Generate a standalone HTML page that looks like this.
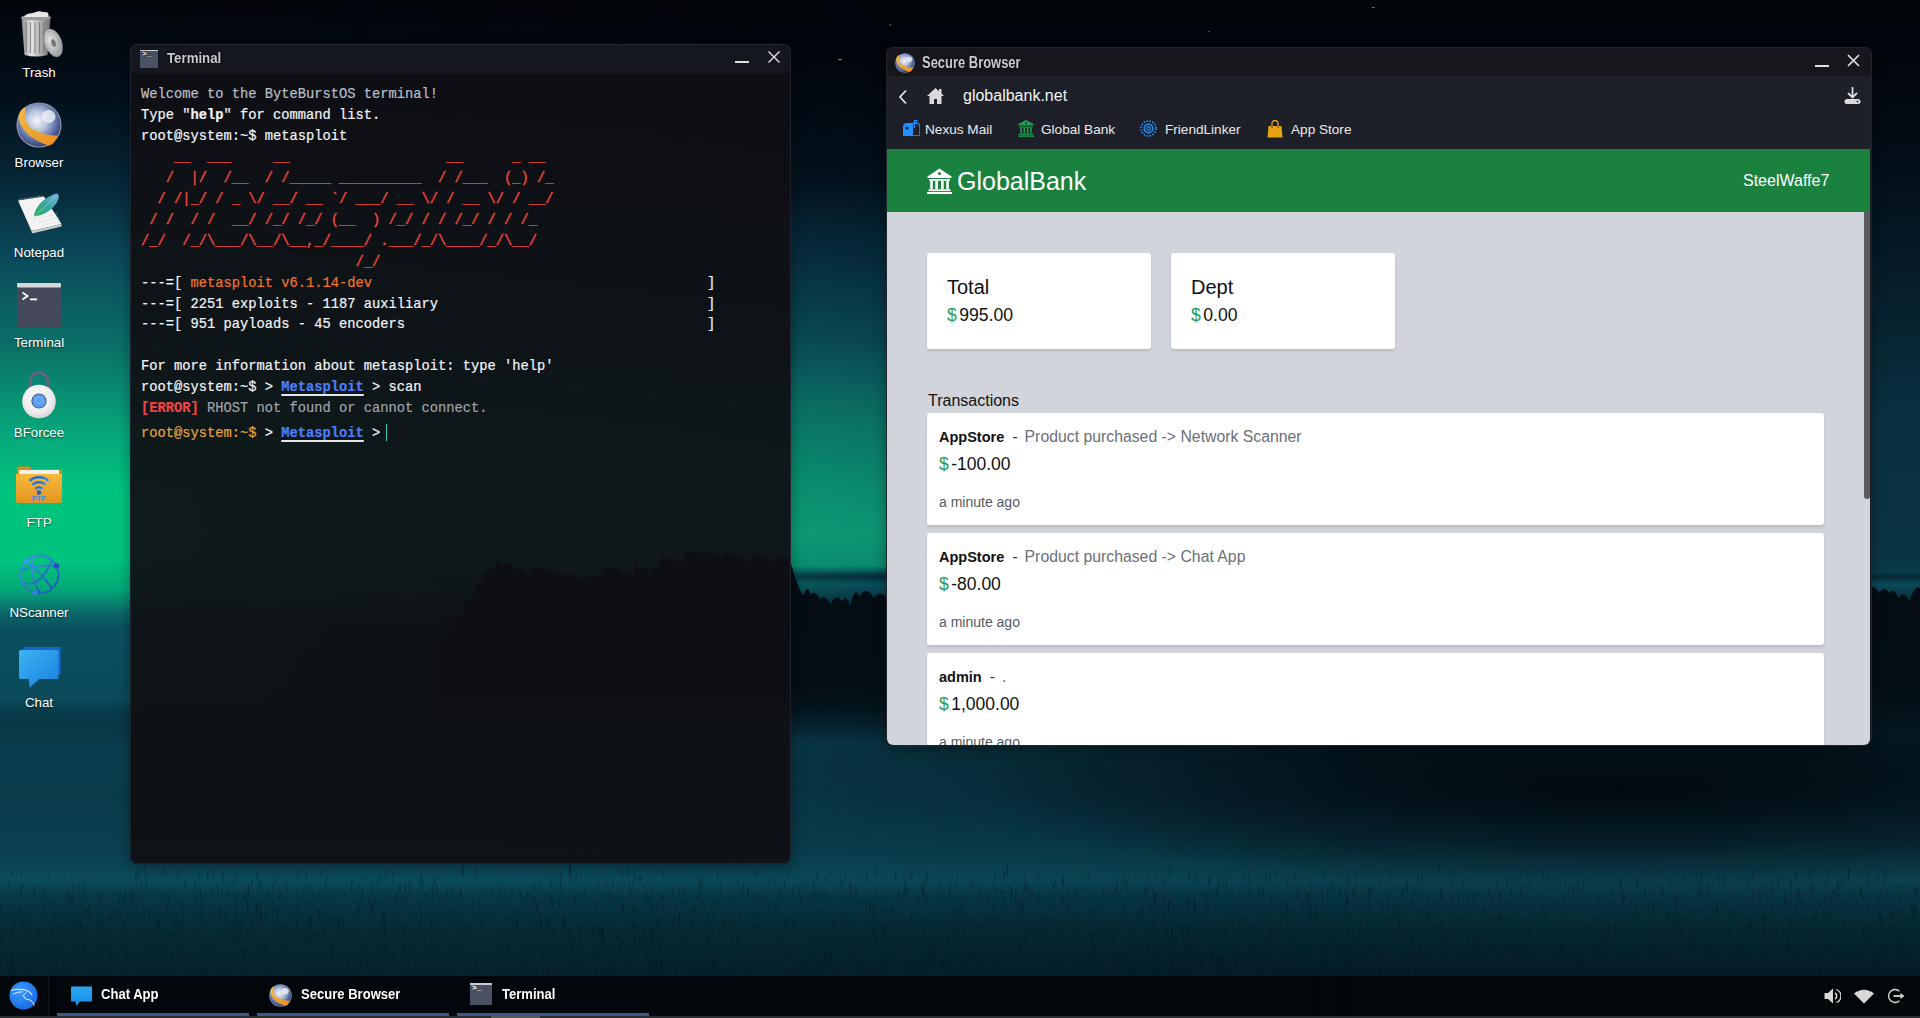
<!DOCTYPE html>
<html><head><meta charset="utf-8">
<style>
*{box-sizing:border-box;margin:0;padding:0}
html,body{width:1920px;height:1018px;overflow:hidden;background:#03060c;font-family:"Liberation Sans",sans-serif}
#bg{position:absolute;left:0;top:0;width:1920px;height:1018px;overflow:hidden}
.layer{position:absolute;left:0;top:0;width:100%;height:100%}
/* desktop icons */
.dicon{position:absolute;left:0;width:78px;height:90px;text-align:center}
.dicon .ic{position:absolute;left:15px;top:8px;width:48px;height:48px}
.dicon .lb{position:absolute;left:-10px;width:98px;top:65px;color:#fff;font-size:13.3px;line-height:16px;text-shadow:0 1px 2px rgba(0,0,0,.6)}
/* windows */
.win{position:absolute;border-radius:7px;overflow:hidden;box-shadow:0 4px 14px rgba(0,0,0,.35)}
.win:after{content:"";position:absolute;left:0;top:0;right:0;bottom:0;border:1px solid rgba(40,44,54,.7);border-radius:7px;pointer-events:none}
.tbar{position:absolute;left:0;top:0;right:0;color:#cfd0d4;font-weight:bold;font-size:14.5px;text-shadow:0 0 2px #000,0 0 1px #000}
.term{left:130px;top:44px;width:661px;height:820px;background:rgba(15,16,20,0.94)}
.term .tbar{height:29px;background:rgba(20,23,31,0.98)}
.mono{position:absolute;left:141px;font-family:"Liberation Mono",monospace;font-size:13.75px;white-space:pre;color:#f2f4f7;-webkit-text-stroke:0.2px currentColor}
.ms{color:#4d7ef7;font-weight:bold;text-decoration:underline;text-decoration-color:#e6e6e6;text-underline-offset:3px;text-decoration-thickness:2px}
.cur{display:inline-block;width:1.6px;height:17px;background:#2ec4b6;vertical-align:-4px;margin-left:-3px}
.card{position:absolute;background:#fff;border-radius:3px;box-shadow:0 2px 3px rgba(0,0,0,.12)}
.ct{position:absolute;left:20px;top:22px;font-size:20px;line-height:24px;color:#111}
.cv{position:absolute;left:20px;top:51px;font-size:17.6px;line-height:22px;color:#111}
.dl{color:#1f9d55;margin-right:2.5px}
.tx{position:absolute;left:40px;width:897px;height:112px;background:#fff;border-radius:3px;box-shadow:0 2px 3px rgba(0,0,0,.12)}
.tn{position:absolute;left:12px;top:14px;font-size:16px;line-height:20px;color:#111;white-space:pre}
.tn b{font-size:14.5px;font-weight:bold}
.dash{margin:0 7px 0 8px;color:#333}
.desc{color:#6b6f78;font-size:15.8px}
.tv{position:absolute;left:12px;top:39.5px;font-size:17.5px;line-height:22px;color:#111}
.tm{position:absolute;left:12px;top:80px;font-size:14px;line-height:18px;color:#555a63}
.tbi{position:absolute;top:0;width:192px;height:42px}
.tbi:after{content:"";position:absolute;left:0;top:37px;width:192px;height:3px;background:#3a5a8a}
.tic{position:absolute}
.tbt{position:absolute;top:10px;color:#fff;font-weight:bold;font-size:14.5px;line-height:17px;text-shadow:0 0 2px #000;transform:scaleX(.9);transform-origin:0 0;white-space:nowrap}
.globe{border-radius:50%;background:radial-gradient(circle at 62% 35%,#ffffff 0,#dfe6f2 18%,#8aa0c8 45%,#3b4f86 70%,#1d2450 100%);box-shadow:inset 0 0 0 1px rgba(255,255,255,0.25)}
.globe:before{content:"";position:absolute;left:6%;top:6%;width:88%;height:88%;border-radius:50%;border:0 solid transparent;border-left:3px solid #f0a030;border-bottom:3px solid #f0a030;transform:rotate(20deg);opacity:.95}
.termic{background:#4a5162;border-top:2px solid #c9ccd3}
.termic:before{content:">_";position:absolute;left:2px;top:-2px;color:#fff;font-family:"Liberation Mono",monospace;font-size:8px;font-weight:bold}
.browser{left:886px;top:47px;width:986px;height:699px;background:#15171c}
</style></head>
<body>
<div id="bg">
  <div class="layer" style="background:linear-gradient(180deg,#02050a 0px,#02060c 60px,#030e18 160px,#06202c 300px,#0a3040 420px,#0a3444 560px,#0a3a48 572px,#062a36 577px,#0a4a58 584px,#0a3a48 594px,#05141c 625px,#05141c 700px,#071c26 730px,#061e28 770px,#062230 800px,#082e3c 840px,#0a3a48 866px,#0b404e 882px,#083442 895px,#052630 930px,#041c24 976px)"></div>
  <div class="layer" style="background:linear-gradient(180deg,rgba(10,50,70,0) 180px,rgba(10,56,76,.5) 260px,rgba(10,80,90,.75) 340px,rgba(12,115,102,.88) 410px,rgba(12,138,110,.95) 480px,rgba(14,148,116,1) 535px,rgba(12,140,112,.95) 566px,rgba(10,60,80,.3) 574px,rgba(10,60,80,0) 580px);-webkit-mask-image:linear-gradient(90deg,#000 0,#000 900px,rgba(0,0,0,.25) 1350px,rgba(0,0,0,0) 1750px);mask-image:linear-gradient(90deg,#000 0,#000 900px,rgba(0,0,0,.25) 1350px,rgba(0,0,0,0) 1750px)"></div>
  <div class="layer" style="background:linear-gradient(180deg,#02050a 0px,#03101c 100px,#062636 180px,#0a4658 250px,#0a7268 350px,#07a57a 430px,#00c47e 490px,#00c47e 560px,#05a878 590px,#0a6a68 612px,#0b5060 628px,#0b4a5a 700px,rgba(10,62,78,0) 745px);-webkit-mask-image:linear-gradient(90deg,#000 0,#000 140px,rgba(0,0,0,.55) 450px,rgba(0,0,0,0) 900px);mask-image:linear-gradient(90deg,#000 0,#000 140px,rgba(0,0,0,.55) 450px,rgba(0,0,0,0) 900px)"></div>
  <div class="layer" style="background:linear-gradient(180deg,rgba(10,62,78,0) 700px,#0a3e4e 745px,#0a3c4c 800px,#0a4050 850px,#0b4c5c 880px,#083644 897px,#062a36 930px,#05222c 976px);-webkit-mask-image:linear-gradient(90deg,#000 0,#000 500px,rgba(0,0,0,.6) 900px,rgba(0,0,0,0) 1350px);mask-image:linear-gradient(90deg,#000 0,#000 500px,rgba(0,0,0,.6) 900px,rgba(0,0,0,0) 1350px)"></div>
  <div class="layer" style="background:radial-gradient(ellipse 650px 100px at 1620px 790px,rgba(1,6,10,.85) 0%,rgba(1,6,10,0) 100%)"></div>
  <svg class="layer" width="1920" height="1018" viewBox="0 0 1920 1018"><defs><linearGradient id="treeg" x1="0" y1="540" x2="0" y2="740" gradientUnits="userSpaceOnUse"><stop offset="0" stop-color="#030c12"/><stop offset="0.75" stop-color="#040e15"/><stop offset="1" stop-color="#05141c" stop-opacity="0"/></linearGradient></defs>
    <path d="M436 740 L436 640 Q441.3 627.9 446.6 639.2 Q453.8 608.7 461.0 619.5 Q466.5 589.2 472.1 600.8 Q476.3 574.3 480.6 585.4 Q486.6 562.4 492.6 570.9 Q497.3 554.5 502.0 567.3 Q508.3 555.6 514.6 569.5 Q521.9 566.2 529.3 577.9 Q533.4 558.6 537.5 569.8 Q541.3 561.8 545.0 571.2 Q548.6 566.1 552.3 576.7 Q559.1 567.2 566.0 579.1 Q571.5 569.2 577.0 579.9 Q581.6 573.4 586.2 587.4 Q593.1 568.4 599.9 578.3 Q604.4 561.2 608.8 569.6 Q615.3 561.2 621.9 574.3 Q627.0 567.1 632.0 580.2 Q635.5 555.1 639.0 568.6 Q644.4 564.3 649.8 574.7 Q653.6 557.8 657.4 570.4 Q661.9 548.7 666.5 558.7 Q673.9 556.3 681.2 565.0 Q685.7 545.5 690.2 553.9 Q696.9 545.5 703.6 556.8 Q708.9 544.9 714.2 557.3 Q718.2 551.0 722.2 559.7 Q727.4 545.1 732.6 554.7 Q739.9 553.9 747.3 563.7 Q754.4 546.9 761.4 557.3 Q768.3 554.8 775.2 563.4 Q782.7 551.1 790.2 560.6 Q796.8 585.9 803.3 595.7 Q807.1 583.1 810.9 594.6 Q815.4 589.2 819.9 599.4 Q825.2 593.5 830.5 604.4 Q836.3 592.4 842.1 601.5 Q846.2 592.9 850.3 605.8 Q854.8 584.3 859.3 596.7 Q866.6 584.4 873.8 598.1 Q880.9 589.2 887.9 599.8 Q891.8 576.6 895.7 590.4 Q900.2 587.3 904.6 596.8 Q911.4 585.5 918.2 595.3 Q922.4 587.5 926.6 595.9 Q931.1 584.9 935.5 598.1 Q941.4 580.5 947.4 594.0 Q951.7 576.3 956.0 585.9 Q961.3 577.0 966.6 586.0 Q971.6 585.2 976.5 593.9 Q981.5 590.3 986.4 604.1 Q992.6 587.1 998.7 598.6 Q1002.7 576.6 1006.8 584.7 Q1013.9 587.2 1021.1 601.0 Q1024.7 586.2 1028.3 597.1 Q1034.7 581.1 1041.1 595.1 Q1044.9 584.7 1048.7 597.2 Q1055.8 587.8 1062.9 600.0 Q1069.6 590.6 1076.2 600.8 Q1082.5 590.4 1088.7 603.6 Q1093.9 588.6 1099.1 601.8 Q1104.9 586.0 1110.6 596.3 Q1116.5 585.7 1122.3 594.2 Q1128.4 591.9 1134.4 605.2 Q1140.8 582.2 1147.3 594.6 Q1153.1 583.0 1158.9 596.1 Q1162.7 588.0 1166.6 596.2 Q1172.5 583.7 1178.4 593.1 Q1184.7 584.0 1191.0 595.6 Q1198.1 580.1 1205.3 588.2 Q1210.0 586.9 1214.7 596.1 Q1218.9 590.5 1223.1 602.5 Q1228.4 590.3 1233.6 600.2 Q1239.8 579.2 1246.0 589.8 Q1252.7 590.6 1259.4 603.9 Q1264.4 585.3 1269.5 595.2 Q1273.5 583.9 1277.6 597.0 Q1284.5 587.4 1291.4 601.1 Q1296.0 578.7 1300.6 589.4 Q1305.2 579.4 1309.8 589.9 Q1315.8 583.9 1321.8 593.8 Q1328.6 591.7 1335.5 602.4 Q1339.3 576.5 1343.1 589.7 Q1346.8 587.3 1350.4 598.8 Q1355.2 588.7 1359.9 596.8 Q1363.9 583.3 1368.0 591.4 Q1374.8 579.8 1381.6 588.6 Q1385.3 586.1 1389.0 596.7 Q1395.0 586.5 1401.0 599.3 Q1408.4 587.0 1415.7 596.1 Q1421.1 578.9 1426.5 586.9 Q1431.9 587.4 1437.3 596.5 Q1441.9 581.5 1446.5 593.7 Q1452.0 585.8 1457.6 598.4 Q1462.7 588.7 1467.8 602.1 Q1471.6 590.9 1475.5 603.3 Q1479.5 583.3 1483.5 595.0 Q1490.6 582.0 1497.8 593.4 Q1504.8 588.7 1511.8 602.4 Q1517.2 586.4 1522.5 595.7 Q1528.9 589.1 1535.3 600.9 Q1541.7 579.4 1548.1 592.8 Q1555.5 591.6 1562.9 602.9 Q1569.6 581.1 1576.2 594.6 Q1583.1 581.6 1590.1 590.1 Q1595.3 584.8 1600.6 597.4 Q1606.0 576.5 1611.5 589.3 Q1615.2 588.8 1619.0 597.8 Q1623.8 588.6 1628.7 597.4 Q1632.8 584.3 1636.9 596.6 Q1643.7 587.0 1650.6 600.7 Q1656.1 591.2 1661.5 599.7 Q1665.9 584.4 1670.3 594.2 Q1676.7 586.2 1683.1 597.4 Q1690.0 585.0 1696.9 594.8 Q1701.9 589.5 1706.9 602.9 Q1711.3 589.6 1715.6 603.4 Q1721.2 585.2 1726.8 594.4 Q1732.4 584.1 1738.1 595.7 Q1741.7 591.5 1745.3 602.6 Q1750.4 588.8 1755.5 600.2 Q1761.0 587.1 1766.4 595.5 Q1772.1 582.6 1777.7 596.4 Q1784.9 580.3 1792.1 591.1 Q1796.1 582.9 1800.2 595.8 Q1807.3 583.6 1814.4 593.5 Q1818.6 585.9 1822.9 599.4 Q1826.9 588.5 1830.9 596.6 Q1835.2 579.6 1839.5 591.8 Q1844.3 581.7 1849.1 593.4 Q1853.0 587.7 1856.9 596.4 Q1862.4 580.0 1868.0 589.2 Q1873.6 583.0 1879.2 593.2 Q1884.4 584.5 1889.5 593.4 Q1893.8 586.1 1898.2 597.9 Q1903.8 589.6 1909.4 601.3 Q1916.3 579.7 1923.3 592.2 L1920 740 Z" fill="url(#treeg)"/><g fill="#5fd6c8"><rect x="838.5" y="59" width="3" height="1.2" opacity=".8"/><rect x="889" y="24.5" width="2.5" height="1" opacity=".6"/><rect x="1372" y="7" width="2.5" height="1" opacity=".7"/><rect x="1208" y="31" width="2" height="1" opacity=".4"/></g><path d="M1196 963l0.7 -11M1771 935l0.4 -11M1730 935l0.1 -5M1102 913l1.2 -6M1470 963l0.4 -4M243 969l-0.9 -5M1886 882l0.1 -12M1301 975l1.4 -9M1716 926l-1.1 -4M125 946l0.5 -3M649 965l-0.6 -7M924 900l-1.4 -12M1440 875l-0.4 -10M1111 899l1.4 -5M377 974l-0.5 -11M681 961l0.7 -4M1531 876l-1.2 -12M654 973l1.3 -6M1047 922l-1.3 -5M286 980l-1.4 -4M1894 930l0.3 -5M1586 931l1.2 -4M63 966l0.7 -4M1824 962l-0.2 -4M287 882l1.5 -7M1636 886l0.7 -7M920 929l-0.4 -4M1898 891l-0.5 -7M171 961l-0.4 -11M1509 954l0.8 -9M698 919l0.8 -7M1326 975l0.2 -9M22 916l-0.1 -9M1568 963l0.4 -6M1417 884l1.1 -11M1322 899l0.1 -8M319 898l0.6 -7M1382 910l0.2 -10M1278 948l0.4 -10M1383 909l0.5 -7M421 949l-0.1 -3M434 906l-1.0 -6M371 935l0.3 -6M1133 972l-0.3 -3M535 905l-0.4 -10M69 903l-0.5 -8M1115 895l0.9 -7M1233 907l0.2 -8M1838 890l1.2 -6M2 943l-1.1 -9M1209 884l-0.8 -7M560 884l1.2 -12M1144 978l-0.3 -7M613 887l-0.1 -6M234 933l0.8 -6M1587 940l1.3 -5M1501 918l1.5 -4M563 935l0.3 -9M1427 960l0.1 -6M645 940l-0.4 -7M1430 898l-0.1 -5M1760 889l0.8 -3M821 955l-0.1 -9M1750 928l-0.9 -11M569 877l0.6 -11M831 961l-1.1 -11M919 937l-1.0 -6M1125 877l1.0 -5M1520 897l1.4 -10M1917 899l-0.8 -11M1240 893l-0.6 -4M1763 947l-1.0 -7M1195 904l-1.3 -6M111 958l-1.1 -11M829 946l1.3 -7M718 954l0.4 -4M971 889l-0.7 -9M1059 959l-1.1 -8M450 958l0.6 -5M1258 952l-1.1 -4M1140 970l-0.5 -7M1529 957l-1.0 -3M1828 914l1.4 -4M1277 878l-0.4 -9M451 947l-0.3 -6M262 891l-0.2 -10M1635 945l0.7 -8M759 898l-1.4 -5M1707 960l-0.1 -3M1708 931l-1.2 -7M297 927l1.1 -6M292 919l-0.6 -4M452 898l-0.4 -11M1801 952l1.3 -7M226 920l0.7 -9M313 897l-1.3 -5M770 884l-0.1 -6M544 956l-0.8 -4M1291 891l1.4 -7M12 961l-1.4 -7M1053 888l-1.2 -6M137 887l-1.3 -11M467 929l-0.7 -4M782 899l1.4 -3M344 929l-1.2 -8M603 941l0.3 -11M1645 896l-0.0 -8M1097 948l1.2 -10M591 965l-1.2 -5M598 961l-0.6 -10M249 916l-0.2 -4M1108 900l-1.4 -9M384 927l-0.2 -4M603 942l0.5 -11M1459 933l0.5 -10M1833 955l0.9 -5M734 901l-0.7 -5M1298 900l0.2 -10M53 906l1.1 -6M1823 915l-0.4 -7M634 945l0.7 -10M183 910l-0.2 -9M1802 905l1.2 -6M885 933l1.3 -10M1023 890l0.9 -4M805 978l0.2 -3M925 885l-0.7 -5M386 925l-0.8 -10M675 979l1.0 -11M1187 907l-0.0 -10M72 903l1.2 -9M383 923l1.1 -9M1196 884l0.0 -3M1126 928l-1.4 -6M599 935l-0.3 -9M1886 898l0.5 -9M1030 926l0.5 -8M1003 902l-0.4 -4M1114 956l1.3 -6M527 901l0.5 -10M1837 892l0.7 -11M1173 939l-0.8 -11M1871 928l-0.3 -3M342 971l0.3 -11M742 954l0.6 -8M718 880l-0.7 -6M1195 879l0.8 -9M431 943l1.1 -10M1398 931l1.2 -8M580 946l-0.9 -12M59 943l-0.9 -8M365 950l0.7 -9M118 966l-0.5 -12M1633 974l0.6 -5M1614 904l-1.0 -5M178 947l0.8 -4M1414 895l1.3 -9M1837 977l-1.2 -4M124 927l0.5 -7M1426 929l-0.4 -8M226 927l-0.0 -9M1848 877l0.7 -10M568 936l0.7 -6M1763 920l0.6 -7M1515 920l1.0 -6M997 931l0.5 -5M141 903l1.5 -7M1039 974l-0.4 -4M1557 960l-1.5 -6M482 928l-1.3 -8M420 886l-1.2 -7M536 892l-1.3 -8M754 932l1.2 -8M1239 898l0.8 -3M793 896l-0.4 -11M1918 971l0.8 -4M810 900l-0.2 -5M520 919l-1.1 -9M325 901l1.2 -6M1700 897l1.4 -10M1150 915l1.3 -11M60 931l0.8 -5M716 908l1.4 -8M1348 904l-0.4 -9M708 944l-0.8 -12M1092 941l-1.1 -10M924 896l-0.2 -10M968 962l0.0 -4M74 924l-0.6 -3M864 974l0.1 -6M1369 899l-0.6 -12M320 877l0.7 -7M1015 974l0.2 -6M1593 925l0.2 -7M398 900l-0.5 -4M276 882l0.9 -5M1423 965l-0.3 -9M1207 917l-0.2 -11M1723 907l0.7 -3M1078 899l-0.0 -10M1673 945l0.7 -4M1174 914l-1.2 -12M123 903l-0.1 -4M1246 893l0.4 -4M1620 959l-0.6 -5M3 939l-0.1 -11M298 917l-0.9 -12M169 902l0.4 -7M1249 907l0.6 -7M859 973l-0.7 -4M948 972l0.5 -8M806 966l-1.2 -6M498 971l0.4 -5M1230 878l-0.5 -10M198 967l-1.4 -8M1866 949l-0.7 -10M784 903l0.7 -4M788 877l-1.0 -6M1811 971l-1.2 -8M799 897l-0.6 -8M207 974l-0.1 -12M197 905l-1.2 -8M1895 932l0.2 -5M1868 913l1.3 -8M733 973l0.9 -6M1016 900l-0.1 -11M851 889l-0.6 -8M1429 935l0.3 -10M258 954l-1.2 -10M1915 909l-0.2 -4M1190 879l-1.2 -9M1114 925l0.7 -3M235 924l0.4 -8M938 898l-0.5 -6M1684 931l1.4 -7M246 959l-1.5 -10M1812 968l-0.2 -9M1608 924l0.0 -10M1366 963l-0.0 -4M2 961l-1.4 -11M1028 905l1.4 -5M1637 965l-0.3 -9M1238 918l0.5 -3M1116 938l-0.6 -7M1412 946l-0.2 -10M1317 917l-1.1 -11M109 960l-0.1 -4M842 887l-1.4 -8M1527 948l0.3 -11M1375 890l1.2 -3M1900 901l-1.2 -6M709 914l-0.2 -3M576 928l1.4 -4M1717 913l-0.1 -7M785 934l0.6 -10M1652 960l1.3 -11M1523 951l1.1 -9M1370 911l-0.7 -6M1309 911l1.0 -8M702 946l-1.1 -6M553 908l-1.2 -7M12 976l-0.5 -11M1775 908l-1.3 -3M1155 936l-0.1 -10M1764 941l-0.2 -5M845 881l0.9 -6M136 914l0.3 -9M181 930l1.1 -6M1495 953l0.1 -4M158 973l-1.4 -9M985 933l-0.7 -4M863 952l-0.6 -5M174 974l-1.2 -6M664 877l-0.9 -6M1309 903l-0.5 -11M1317 969l-0.8 -4M548 965l-0.5 -8M973 889l0.5 -7M1181 931l-0.2 -4M1688 926l0.3 -8M337 957l-1.2 -3M1450 877l0.4 -4M546 898l-1.0 -7M638 938l1.0 -11M1189 879l-0.5 -7M1200 970l0.9 -6M1810 885l1.5 -11M250 957l-0.7 -7M333 974l-0.7 -7M1189 947l-0.6 -7M68 891l-0.0 -5M1115 972l-0.6 -10M650 909l-1.4 -11M959 940l-0.8 -3M1899 914l-1.4 -7M234 979l-0.8 -6M125 980l1.3 -10M1605 917l-0.7 -5M126 956l-1.5 -7M585 896l0.7 -10M1751 928l-0.7 -8M70 934l-1.3 -4M475 976l1.0 -7M1429 922l-0.5 -7M1218 895l-1.1 -6M17 914l-0.6 -3M439 951l-0.7 -8M1403 973l0.3 -4M1353 936l0.4 -11M1326 911l0.1 -7M183 924l0.1 -7M1610 943l0.5 -8M599 935l0.4 -8M257 943l-1.2 -5M1784 937l-1.4 -6M518 929l-1.3 -11M675 948l-0.8 -3M540 886l-0.1 -5M931 952l-0.1 -9M1032 976l-1.4 -9M970 923l-0.4 -9M1184 952l0.6 -11M1362 915l0.4 -9M117 914l0.1 -7M1387 935l-0.2 -11M1088 883l1.4 -9M162 950l0.9 -8M1651 936l0.6 -9M1840 896l-0.2 -4M1754 894l0.8 -6M1021 949l0.6 -11M1863 937l0.2 -9M94 883l-1.4 -7M365 882l0.9 -6M463 943l-0.1 -11M631 926l-1.1 -3M286 960l-0.4 -11M480 948l-1.1 -7M1006 907l-1.2 -10M843 941l-0.5 -11M1817 971l-1.5 -7M498 893l0.9 -10M12 935l1.2 -11M287 889l-1.3 -6M819 934l1.3 -6M913 961l-0.2 -5M200 980l0.1 -9M1293 939l-1.1 -6M57 929l0.5 -3M648 922l-0.9 -7M1637 901l1.2 -4M1110 956l1.2 -3M1798 899l1.0 -7M1139 915l0.1 -4M348 971l-0.0 -11M1505 976l-0.1 -11M1701 978l1.3 -6M1607 893l-0.7 -4M1259 892l-0.5 -3M663 914l-0.4 -8M513 976l0.8 -8M1791 970l-0.9 -4M1420 947l0.7 -7M822 914l-1.4 -4M1828 884l-0.7 -7M1500 909l1.3 -11M89 914l-0.4 -9M572 947l-0.0 -8M1307 975l0.9 -7M1787 945l0.6 -10M371 908l0.6 -3M631 897l0.5 -3M687 952l0.6 -11M421 880l0.4 -8M552 890l-1.1 -9M1598 948l-0.5 -10M509 978l-0.1 -9M1079 917l-1.2 -4M1118 978l1.1 -9M1895 931l-0.4 -7M1459 905l0.1 -12M1438 945l-1.2 -8M251 925l0.9 -4M1436 928l0.8 -4M414 954l-1.5 -5M1133 945l-0.8 -12M1404 944l-0.8 -6M1053 972l-0.0 -8M1250 930l0.5 -5M743 909l0.6 -6M1260 964l-0.4 -6M1442 931l-1.4 -11M1030 897l0.9 -5M1024 883l0.4 -9M1902 928l0.6 -4M135 879l1.3 -5M957 924l-0.4 -5M1887 972l0.5 -11M510 972l-0.8 -8M1171 890l-0.9 -4M1210 895l-0.7 -6M948 943l-0.5 -9M1117 962l0.4 -8M1082 877l1.1 -4M1602 971l1.1 -8M1346 905l0.6 -10M903 926l-0.1 -11M403 899l-0.9 -5M1401 935l-0.7 -9M1141 914l-0.2 -8M1717 973l-0.5 -5M204 978l1.0 -6M1875 911l-1.0 -7M479 909l0.1 -9M559 907l-0.2 -4M144 917l-0.7 -10M1644 898l1.3 -5M906 887l-0.7 -8M1454 970l-0.2 -9M60 930l0.2 -6M10 971l0.6 -12M1318 980l-0.1 -10M951 889l-0.6 -8M1275 975l1.5 -12M1825 901l1.0 -6M1072 904l-1.1 -5M276 911l0.4 -5M251 891l0.7 -11M1403 931l-0.3 -6M1752 963l-1.3 -9M404 962l-0.8 -5M724 931l0.3 -11M534 938l-0.3 -4M125 969l0.3 -11M739 942l0.1 -5M955 933l0.4 -11M632 949l-0.6 -8M905 948l-0.4 -11M1033 952l-0.8 -5M1771 953l-0.0 -5M867 910l-1.4 -12M274 927l0.8 -5M1885 955l1.5 -7M1146 892l-0.2 -4M1354 902l1.3 -12M1250 955l0.8 -12M1373 949l-0.0 -11M143 976l1.3 -9M284 953l-0.1 -7M447 961l-0.2 -10M942 935l-0.1 -6M1848 878l1.0 -9M662 899l0.4 -4M731 942l0.4 -11M1706 963l-1.0 -7M1542 914l-0.0 -11M1294 883l0.1 -8M548 977l-0.7 -9M1312 926l-0.4 -9M1500 965l-1.0 -6M632 969l-0.3 -12M461 896l-0.6 -5M955 913l-1.1 -7M277 921l1.4 -11M1287 960l1.1 -6M814 959l0.8 -9M657 926l-1.4 -12M542 932l-1.0 -11M200 924l-0.1 -10M1240 926l-1.4 -7M1828 903l0.8 -5M975 959l1.0 -4M386 959l-0.6 -10M740 920l1.5 -7M249 897l-0.8 -12M381 910l0.2 -11M1616 937l-1.1 -12M433 890l1.5 -10M1482 959l-0.8 -8M624 888l0.4 -3M1908 937l0.4 -7M1181 972l0.8 -11M1393 912l-0.7 -7M393 881l1.0 -10M777 910l0.6 -9M681 909l0.8 -9M1503 944l-0.7 -3M780 901l0.6 -12M1080 969l-0.2 -9M753 899l1.0 -4M1234 954l0.7 -5M1073 900l1.4 -11M1461 956l0.1 -4M663 920l-0.2 -4M456 923l-1.4 -4M1870 971l-1.1 -7M824 900l-1.5 -8M573 967l-0.3 -5M1819 905l1.1 -5M662 975l-0.9 -9M923 936l1.4 -9M1322 964l-0.9 -8M1287 913l-0.0 -6M62 977l-0.4 -8M877 938l0.2 -7M529 931l-0.5 -9M1226 936l-1.5 -7M243 960l1.0 -10M1548 880l-1.1 -4M1522 922l1.2 -4M402 946l-1.4 -9M1113 942l0.9 -8M1579 883l-0.1 -3M51 936l1.0 -10M1406 923l0.4 -10M421 887l-0.9 -8M1596 958l0.1 -11M1124 915l1.3 -10M67 935l-0.2 -4M656 961l1.3 -8M373 947l-0.2 -10M357 943l0.5 -12M1621 886l1.0 -8M1389 911l-0.6 -10M508 953l1.3 -9M1132 970l0.3 -4M1896 908l-1.4 -4M1406 965l-1.4 -11M589 917l-0.7 -3M652 940l-1.2 -12M258 882l-0.6 -8M1719 889l-0.4 -4M1352 919l-1.3 -7M775 885l-1.0 -7M1368 928l-0.6 -10M149 958l-0.5 -3M1701 930l-0.6 -4M1127 892l-0.3 -12M132 926l-1.3 -4M1749 878l1.4 -4M320 914l-1.4 -5M887 901l-1.1 -7M1512 897l-1.1 -8M1377 961l1.2 -6M547 937l-0.0 -5M827 941l0.6 -8M652 912l-0.8 -8M1509 920l-0.6 -4M1039 905l-0.6 -11M415 967l1.2 -10M1048 938l0.5 -4M1611 896l0.9 -9M560 909l0.0 -11M339 891l1.0 -5M1202 970l-0.7 -6M1095 954l-0.9 -7M239 944l0.9 -11M1629 963l-0.4 -6M1735 948l-1.3 -8M1087 971l1.2 -7M73 892l-0.2 -10M1128 881l0.8 -5M1682 941l-0.6 -8M1619 961l-1.1 -7M1847 904l-0.4 -3M51 975l0.6 -5M410 896l1.4 -4M877 899l-0.6 -9M346 955l0.2 -6M362 899l1.3 -11M1106 929l0.2 -10M1362 929l-1.0 -10M657 913l-0.6 -11M1415 974l0.7 -7M204 964l-1.2 -6M735 960l-0.5 -4M1758 902l1.0 -11M856 959l-0.9 -11M1402 895l-0.3 -8M1881 895l1.2 -8M1679 906l-1.1 -9M643 938l1.0 -9M1821 976l-0.5 -6M1452 888l1.0 -10M605 975l-1.1 -3M1675 931l-0.2 -10M267 960l-0.0 -9M21 877l0.9 -6M1800 927l0.5 -10M1110 942l-0.7 -8M1493 903l-1.4 -9M1680 935l-0.1 -5M1183 941l-1.1 -12M420 904l1.4 -3M1849 966l-0.9 -8M1695 949l0.6 -9M455 949l0.3 -6M1420 957l-0.3 -12M1104 970l-1.2 -5M965 943l1.3 -5M1026 959l1.3 -3M1602 934l0.9 -3M1869 978l1.1 -7M1620 886l-1.4 -8M1826 944l-1.0 -8M673 896l-0.4 -7M1379 976l-0.7 -11M1173 962l-0.5 -4M1179 973l0.6 -7M131 899l-0.5 -12M1600 878l0.5 -4M1898 966l-0.1 -9M274 937l1.2 -5M1421 948l1.3 -8M1884 876l-1.0 -7M1442 965l0.4 -9M1814 893l0.1 -9M994 912l-0.3 -9M866 885l0.9 -10M1597 947l0.3 -7M166 916l0.8 -10M735 932l-0.7 -8M660 897l-1.1 -4M1661 949l0.3 -8M1740 968l-1.3 -5M570 963l1.4 -8M363 944l0.6 -8M972 961l-1.3 -10M1561 953l-0.6 -9M172 948l0.9 -8M330 921l-0.9 -3M213 898l-0.4 -12M1454 938l1.3 -5M406 894l-1.2 -11M1894 944l-0.2 -8M1831 899l0.1 -4M1345 971l-1.1 -10M570 970l-0.7 -12M1605 926l-1.2 -5M67 905l-0.5 -5M261 917l-0.2 -12M1185 977l1.3 -10M1674 969l0.3 -6M635 882l-0.8 -12M652 944l-1.1 -5M1682 938l-0.0 -11M916 975l0.5 -8M755 927l-0.4 -5M1463 888l1.3 -9M1248 881l0.8 -11M1095 909l-1.4 -3M1711 946l1.1 -7M1415 949l1.3 -5M307 888l1.5 -4M382 917l0.9 -4M1709 892l-1.0 -9M1916 949l-0.6 -3M1004 930l-1.4 -6M1240 905l0.5 -6M1428 905l0.3 -9M928 884l-1.4 -8M255 911l-1.2 -5M1765 937l-0.7 -8M1664 931l-1.5 -3M68 898l0.1 -7M712 975l0.8 -12M1031 893l-1.1 -5M280 928l-0.9 -8M156 934l1.2 -11M1578 965l0.3 -6M1026 941l0.9 -5M451 911l-0.2 -3M1693 916l-0.5 -8M1272 909l-1.4 -12M261 923l-0.0 -8M298 893l-1.0 -5M215 949l-0.8 -9M1662 887l-1.0 -4M1382 948l-1.4 -9M282 932l0.9 -11M747 941l-0.6 -5M1789 929l1.3 -9M117 951l-1.2 -4M640 954l0.5 -12M825 898l-0.1 -7M994 950l-0.1 -9M1122 891l1.1 -9M1409 976l-1.3 -12M1920 970l0.8 -9M665 910l-1.2 -4M325 888l1.5 -11M844 971l0.0 -4M1622 918l-1.2 -9M1661 942l-1.1 -10M1626 928l-0.1 -10M83 898l-0.8 -8M790 954l-0.4 -9M440 901l0.7 -8M1207 902l0.9 -9M1216 893l1.4 -7M456 928l0.2 -3M1025 947l0.6 -7M1518 953l0.2 -4M1281 927l-0.7 -8M158 930l1.5 -10M1624 900l0.4 -8M55 966l0.3 -6M185 886l-0.8 -7M1671 885l-0.6 -8M1350 967l0.0 -3M1861 948l-1.2 -6M576 880l1.1 -7M210 946l-1.4 -9M1609 946l1.3 -5M423 889l0.1 -11M1163 886l1.4 -6M1909 968l-0.9 -10M448 966l1.0 -4M1527 878l-1.3 -10M213 879l1.5 -10M927 971l1.5 -9M1327 899l0.8 -11M266 918l-1.0 -7M159 956l1.1 -9M1752 916l0.7 -10M222 972l1.1 -5M1818 940l-1.3 -4M1633 917l-1.3 -5M1470 900l-0.6 -10M325 926l-0.1 -8M1039 938l-0.9 -12M804 933l0.4 -6M1792 933l-1.5 -12M1331 938l-0.7 -10M127 979l1.3 -7M986 951l0.5 -10M1317 916l0.3 -11M963 924l1.2 -5M407 945l-1.2 -7M523 907l-1.2 -7M147 886l-1.3 -7M309 974l-0.3 -11M983 966l-0.6 -4M368 969l-0.5 -7M1760 960l1.2 -6M493 896l-0.9 -6M1215 944l0.5 -6M202 918l0.7 -8M321 956l1.2 -9M56 925l-0.0 -11M630 933l-1.4 -6M1209 885l1.1 -7M1833 894l-0.4 -5M652 895l-1.0 -10M435 884l-0.2 -8M1378 964l0.6 -11M676 913l0.9 -10M1140 954l1.2 -10M1458 893l-0.9 -4M1748 969l-1.1 -9M1702 913l0.5 -6M1199 968l1.1 -6M1853 886l0.0 -5M763 903l-1.2 -6M236 941l-0.4 -10M1703 976l-0.5 -6M310 945l-0.0 -12M1468 974l-0.9 -4M1900 976l-1.3 -12M805 977l1.2 -8M815 901l-0.9 -9M1387 897l-0.8 -7M972 932l-0.4 -5M1172 936l-0.6 -7M1169 915l0.6 -4M513 942l-0.5 -4M1790 891l1.5 -12M1507 887l-0.6 -11M1811 895l0.5 -12M1305 957l1.2 -4M1547 893l0.3 -6M939 890l0.7 -7M1496 926l0.2 -9M203 907l-1.2 -8M1467 907l0.9 -9M63 935l1.3 -11M1187 911l0.6 -10M1437 915l-1.0 -6M1269 948l-0.6 -10M1164 949l-0.6 -5M596 953l-0.9 -6M1821 972l-1.1 -7M136 876l0.3 -4M786 924l-1.0 -8M720 938l0.3 -11M1450 875l1.0 -4M944 968l-0.1 -5M1535 901l1.1 -5M1178 971l1.1 -8M523 927l0.5 -3M988 922l0.4 -7M1858 975l-1.4 -6M297 878l1.5 -10M1511 912l-0.9 -11M13 973l0.0 -12M78 932l-0.4 -9M781 895l0.1 -5M86 896l-0.3 -9M1789 909l-0.3 -10M1067 929l-1.4 -8M593 937l-0.9 -7M693 976l-0.6 -11M1902 938l0.6 -6M1592 933l-0.8 -11M1521 876l0.5 -4M1296 897l1.5 -11M1750 958l-0.4 -7M578 929l-1.4 -4M95 957l1.4 -8M1700 888l0.6 -8M1217 942l-0.0 -7M938 947l-1.0 -6M1913 919l0.9 -10M634 912l-0.8 -3M1749 891l-1.3 -12M1050 882l1.3 -3M1169 877l0.3 -10M1663 897l-0.5 -9M301 903l0.8 -8M177 965l0.3 -5M360 890l-0.5 -4M1287 906l-1.4 -7M111 920l1.2 -10M759 965l-0.8 -12M1345 894l1.0 -3M1476 898l-1.5 -4M1063 904l-0.3 -11M266 917l-0.9 -5M1513 915l0.5 -4M1301 908l1.3 -3M1157 949l-0.9 -11M1814 932l1.4 -7M922 956l-0.1 -6M885 912l1.5 -4M1779 979l0.8 -6M898 931l0.1 -3M487 891l1.0 -6M1119 958l-0.9 -10M1667 960l-0.8 -10M1884 973l-0.6 -6M1691 892l-0.6 -4M1042 924l1.3 -8M1324 880l-0.8 -11M483 916l0.6 -3M124 904l1.2 -8M803 971l-0.1 -11M1418 897l0.3 -5M1506 907l-0.7 -6M674 926l0.5 -10M1757 978l0.1 -6M384 925l1.2 -11M878 923l-0.1 -8M1906 926l-0.1 -8M1842 963l-0.3 -6M78 922l0.4 -5M234 941l0.3 -8M333 960l-1.0 -12M164 900l1.4 -7M1141 876l1.0 -3M897 961l-0.9 -3M1425 939l0.3 -8M499 948l0.9 -5M1760 909l0.3 -6M856 897l-0.4 -7M218 894l-0.8 -12M1310 916l0.7 -8M1138 917l-0.5 -5M960 913l1.5 -4M685 897l-0.9 -4M442 914l0.6 -9M333 950l0.6 -10M1453 906l-0.2 -10M1360 961l-0.2 -9M1730 936l-0.5 -10M662 978l-0.6 -5M198 936l-0.4 -7M704 909l-1.1 -7M980 930l0.9 -6M451 977l-0.2 -6M1311 961l-0.8 -11M965 934l-0.9 -9M538 932l-0.6 -6M1817 922l0.4 -4M1156 899l0.9 -8M1085 925l-0.7 -6M1467 941l-0.6 -8M1869 943l0.9 -6M1857 956l1.5 -5M867 876l0.6 -6M330 923l1.1 -9M360 969l0.4 -10M942 918l-0.6 -8M1348 948l0.6 -5M1698 885l-1.1 -11M754 928l-0.4 -3M1145 933l0.5 -11M1422 884l-0.1 -10M552 955l0.6 -3M1833 975l1.3 -7M755 951l-0.8 -6M1261 897l1.2 -6M1413 938l-1.0 -8M1578 891l-0.3 -10M477 969l-1.0 -10M1916 892l-1.0 -5M225 942l-1.0 -12M693 967l0.7 -10M952 929l0.6 -4M1161 969l0.4 -4M207 950l1.1 -8M431 927l0.5 -6M646 962l0.5 -4M951 932l-1.1 -5M1380 916l0.4 -5M1341 897l-0.3 -7M338 929l-0.0 -11M463 876l-0.4 -6M210 921l1.2 -11M79 952l-0.8 -9M647 898l0.6 -6M1863 931l0.2 -11M1296 876l-1.3 -4M532 893l0.3 -6M845 924l0.7 -11M112 975l-1.1 -6M97 927l0.6 -8M835 946l0.1 -8M404 952l-1.2 -11M100 975l-0.8 -11M1177 963l1.3 -4M683 924l-0.4 -4M405 935l0.8 -11M1043 934l-0.1 -5M1690 940l-0.2 -7M135 897l1.1 -5M874 883l1.5 -4M694 914l1.0 -6M1856 905l1.5 -4M911 921l0.4 -8M1025 933l0.6 -11M1163 922l1.1 -6M1673 953l-1.5 -4M150 920l-1.2 -12M1195 911l1.0 -10M918 905l0.7 -8M1702 895l1.3 -5M170 941l0.4 -9M1181 929l-0.6 -3M1111 929l1.1 -8M1183 929l-0.4 -4M1871 934l-0.8 -9M852 940l0.9 -8M1457 979l-0.3 -8M311 925l-0.7 -9M248 906l-0.0 -5M1387 953l-1.1 -6M1526 951l0.0 -10M127 941l-1.4 -9M1406 890l-0.0 -11M1446 940l0.9 -10M1770 899l1.5 -10M1809 876l1.3 -9M578 945l1.3 -6M179 959l-0.1 -10M1669 916l1.0 -3M580 936l-0.7 -8M233 886l0.1 -6M92 924l-0.7 -6M84 952l-0.1 -10M1654 941l-0.6 -10M903 900l1.0 -12M1501 972l1.2 -4M711 959l1.0 -3M257 876l0.6 -4M1170 906l1.1 -8M1558 892l0.0 -10M910 965l-0.7 -5M1598 905l1.4 -10M247 938l0.5 -8M1179 904l-0.1 -6M1897 950l0.4 -9M1290 914l-0.2 -5M580 877l0.7 -4M121 917l0.0 -7M1131 974l-0.1 -5M738 943l-0.8 -11M309 929l0.4 -12M223 880l0.3 -7M1867 884l0.3 -12M1572 949l1.5 -10M1625 902l-1.1 -9M1791 897l0.3 -4M1219 968l-0.9 -4M8 887l1.1 -8M362 950l0.7 -6M779 942l1.4 -6M1582 942l-0.8 -8M307 945l0.1 -11M956 898l0.8 -6M1235 970l1.1 -11M1450 917l-0.2 -6M102 953l-1.3 -11M335 965l-0.6 -7M1177 944l0.9 -8M1057 931l1.3 -11M1078 970l-0.5 -4M646 961l0.2 -8M1494 952l-0.1 -10M1452 947l0.6 -10M204 949l1.3 -9M216 952l-0.2 -3M96 949l-1.1 -4M653 937l-0.5 -8M40 968l1.3 -5M818 943l-0.8 -4M1134 902l-0.7 -9M1846 909l0.9 -6M1683 881l0.1 -7M1012 894l-1.1 -8M1914 896l0.7 -10M1803 944l0.3 -8M101 903l-1.2 -11M537 908l-0.0 -5M1802 877l-1.0 -3M1528 966l-0.2 -8M1595 965l-1.2 -8M54 923l-1.4 -12M922 922l-0.3 -9M424 945l0.2 -9M647 910l-0.4 -11M1163 916l1.5 -4M508 909l1.4 -7M733 930l-0.5 -8M74 932l1.4 -11M1172 958l0.3 -4M1478 945l0.9 -10M1582 979l-1.2 -11M574 940l-0.2 -4M680 922l-1.5 -4M1731 950l-1.3 -4M1027 974l1.1 -5M1867 944l0.5 -4M1528 890l-1.1 -6M819 898l1.1 -6M1156 878l-0.8 -8M1226 891l0.8 -12M399 892l1.2 -9M250 968l0.2 -3M975 923l0.1 -4M1653 896l-0.5 -8M1714 885l-1.4 -5M824 961l0.0 -8M174 911l-1.1 -4M629 938l0.0 -7M108 951l0.5 -3M1759 899l-0.6 -6M158 952l-1.4 -7M1395 891l-0.5 -7M90 979l-1.0 -11M1649 911l-1.0 -6M1565 961l0.4 -8M1773 892l-1.5 -12M832 959l-0.1 -4M1027 962l1.4 -7M351 890l1.2 -10M1608 885l-0.2 -5M935 953l-1.4 -11M258 926l-1.5 -6M360 942l1.0 -6M15 926l-0.8 -10M1785 908l0.5 -11M1476 973l1.0 -11M1544 879l-1.0 -10M1272 928l-1.1 -5M1014 884l0.9 -5M500 899l1.4 -9M1322 955l1.5 -10M1221 980l-0.3 -9M1723 885l-1.0 -7M1822 951l0.7 -5M1817 886l0.4 -4M100 930l0.7 -11M236 950l0.2 -5M98 945l1.2 -11M573 951l0.7 -9M610 964l-0.7 -8M220 920l1.0 -11M850 897l0.7 -8M174 927l0.3 -7M870 914l-0.1 -10M1126 972l-1.5 -12M1362 949l-0.2 -5M801 973l-0.2 -6M87 916l-1.0 -7M561 934l0.4 -7M1232 931l0.5 -8M684 895l-1.1 -11M421 969l0.9 -7M1155 978l-0.4 -11M1561 950l-0.3 -9M1636 910l0.7 -8M44 914l0.0 -8M1410 961l1.3 -6M679 922l0.6 -11M622 954l-1.1 -9M702 890l0.3 -12M331 956l-0.6 -12M280 893l-0.1 -4M1833 941l1.4 -4M714 921l-0.2 -11M1249 895l1.0 -8M1349 937l0.2 -8M1295 965l-1.0 -11M1464 926l-1.4 -10M1872 968l0.1 -8M1793 976l-0.0 -10M913 876l-0.4 -5M1346 892l1.1 -4M1880 920l-1.1 -10M1110 941l0.2 -6M1180 920l1.4 -5M1802 911l1.0 -8M1125 884l-1.0 -7M1486 915l-1.0 -11M640 881l1.2 -5M1740 953l0.8 -9M1269 954l1.0 -4M150 938l-0.4 -10M748 954l-0.6 -6M37 909l-0.9 -4M1607 973l-0.0 -8M1092 913l0.4 -5M1260 932l-1.1 -11M209 962l1.4 -6M566 950l-1.4 -8M159 925l0.8 -3M1231 917l1.3 -4M873 934l1.2 -8M1011 902l0.9 -11M1350 970l0.6 -7M63 962l0.9 -10M829 968l1.3 -11M1008 875l-0.9 -11M377 950l-0.9 -5M1614 932l0.5 -10M1757 908l0.5 -4M617 940l1.2 -8M559 973l-1.1 -9M717 955l-0.1 -9M85 916l-0.8 -8M141 891l0.4 -10M66 881l-0.6 -3M166 954l-0.1 -8M1889 976l-0.3 -9M1643 912l-0.4 -11M886 974l1.4 -8M1353 948l1.1 -5M432 893l-1.0 -6M1514 967l-1.0 -5M363 959l-1.2 -6M930 965l0.0 -12M530 896l-1.0 -3M469 965l1.0 -11M1232 899l-0.4 -5M1883 884l0.9 -5M139 880l0.3 -10M896 881l-0.8 -9M1476 952l-0.1 -10M1260 898l-1.3 -9M908 892l0.8 -4M1434 907l-0.8 -8M35 898l-0.8 -12M1846 960l0.0 -6M1880 925l-0.3 -10M1025 979l-1.5 -3M474 958l-0.6 -4M982 881l-0.5 -4M329 898l0.5 -3M685 966l-1.5 -6M476 879l0.2 -12M1574 894l-1.1 -9M1673 925l0.8 -11M512 892l0.1 -4M623 877l-0.8 -8M1216 910l0.2 -10M843 901l-0.6 -8M1658 970l-1.4 -11M903 950l-1.4 -12M1688 926l-0.5 -9M201 899l-1.0 -12M1362 972l-1.0 -5M397 897l-0.1 -7M1253 967l1.0 -5M1879 882l-0.9 -9M1638 920l1.4 -5M271 971l-1.4 -11M1434 896l1.2 -4M239 930l-0.1 -11M1674 973l1.3 -9M315 937l0.5 -5M1265 881l1.4 -8M1282 969l0.6 -7M610 979l0.2 -11M634 943l1.1 -5M432 928l0.2 -11M237 912l0.3 -8M1046 921l1.4 -7M1752 882l1.4 -12M1 917l-0.1 -11M1098 906l1.1 -9M1314 897l1.4 -6M1746 937l-1.0 -11M1906 950l0.4 -7M1783 939l1.1 -6M869 915l1.4 -12M1461 911l-1.0 -3M1199 972l1.3 -5M1768 891l-0.1 -5M1582 965l0.7 -11M385 898l-1.3 -4M359 913l-0.2 -6M363 979l1.4 -5M799 966l1.2 -4M874 920l-0.4 -10M1649 896l0.7 -9M1490 899l1.4 -3M1899 949l0.9 -11M208 881l-0.6 -9M1623 903l-0.4 -7M267 899l0.9 -9M1210 935l-1.4 -5M1573 944l0.8 -7M1514 959l1.0 -10M1736 919l-0.3 -10M170 974l1.3 -3M904 884l-0.3 -7M479 925l-1.2 -7M1477 956l-1.4 -5M947 887l-0.4 -4M1391 877l-1.2 -8M850 891l-0.3 -9M1359 942l0.1 -11M634 928l-0.2 -11M78 894l0.6 -11M1729 967l1.4 -3M442 937l1.0 -9M974 881l-0.6 -3M430 973l0.2 -10M145 955l-1.4 -9M414 945l1.3 -11M1415 958l-1.0 -7M1187 914l-0.3 -4M1290 899l-1.1 -3M621 920l0.7 -5M1219 933l-0.4 -8M1204 898l-1.4 -4M1565 947l0.1 -6M1123 904l-0.3 -4M1348 907l-1.3 -7M1063 886l0.2 -8M508 933l-0.2 -5M1166 954l0.1 -11M1488 896l1.3 -9M801 904l-0.8 -12M455 912l0.2 -4M994 969l-0.5 -6M787 930l0.2 -11M633 889l-0.9 -8M714 968l-1.5 -10M258 924l1.1 -5M1662 909l-0.8 -5M199 971l0.4 -6M1699 894l-0.0 -7M367 978l1.4 -3M399 926l-0.3 -11M1089 938l0.6 -4M1155 904l0.3 -11M243 918l-0.8 -11M1663 876l-0.9 -8M24 888l-1.0 -3M648 963l-0.4 -6M759 921l-1.1 -8M1471 980l0.0 -7M859 908l-0.8 -4M181 957l0.8 -3M630 887l-1.4 -6M1553 941l0.5 -3M222 895l0.6 -6M725 979l0.8 -9M1335 975l0.5 -10M801 977l1.4 -6M1354 912l0.9 -9M976 932l1.2 -9M1092 945l-0.1 -10M90 919l0.3 -9M1797 883l0.5 -11M1583 940l1.1 -11M287 892l-1.5 -4M660 929l-1.4 -12M1235 943l-0.7 -8M564 929l-1.1 -8M1768 902l-1.2 -6M1250 930l-1.1 -6M1646 912l1.3 -8M98 956l0.8 -9M1152 891l0.7 -5M256 908l0.4 -3M1630 910l0.4 -9M1127 898l1.4 -7M640 881l-0.9 -4M933 959l0.3 -10M1745 882l-1.4 -4M616 941l0.3 -5M157 921l0.4 -10M1798 976l-0.9 -7M400 893l0.8 -8M1527 907l-0.2 -4M251 930l0.6 -10M603 886l-0.3 -3M173 957l1.2 -3M1711 952l-0.0 -9M303 893l1.5 -6M1411 909l0.7 -11M653 931l0.0 -6M362 899l0.0 -10M247 914l0.7 -6M686 940l1.4 -9M995 880l0.6 -9M48 930l0.4 -8M1530 935l0.4 -11M866 922l-1.3 -4M1910 958l0.2 -5M572 979l0.8 -11M934 946l1.1 -6M420 910l-1.3 -9M1419 964l1.3 -9M1122 957l-1.3 -7M265 955l-0.4 -11M1842 926l1.3 -7M145 876l0.1 -11M1530 890l0.2 -10M891 928l-0.4 -7M1087 891l-1.3 -3M1015 904l-1.3 -4M557 955l-1.2 -8M600 950l-0.4 -7M47 955l0.7 -10M1016 907l-1.3 -10M1152 929l0.8 -9M1123 900l-1.5 -4M770 911l-1.3 -5M204 973l0.7 -9M55 977l-1.4 -11M586 911l-0.8 -4M230 976l0.8 -11M1686 942l-0.5 -5M81 928l0.1 -5M702 978l-1.0 -9M280 900l0.1 -5M638 950l0.4 -6M1180 931l1.4 -4M80 930l0.1 -11M635 915l1.5 -9M1839 899l-1.3 -5M1271 938l-0.7 -10M434 942l-0.7 -8M1548 933l-0.1 -3M662 969l-0.8 -11M384 938l1.3 -11M1253 939l1.0 -8M565 926l-0.6 -10M747 968l1.4 -4M108 923l1.2 -6M1826 932l0.3 -5M399 937l1.4 -10M1194 914l-0.0 -7M447 896l0.2 -8M812 959l0.4 -5M1517 964l-0.8 -4M516 926l1.0 -7M279 900l1.2 -4M470 977l1.0 -9M1874 966l1.1 -10M620 955l-1.2 -10M699 894l-0.1 -10M1653 909l0.3 -4M48 878l0.6 -4M39 932l0.9 -9M670 938l-1.0 -11M994 890l-0.9 -8M596 930l-1.0 -8M32 941l-1.2 -7M185 969l-1.2 -4M143 942l1.0 -8M1609 933l-0.1 -10M1068 897l-1.0 -6M855 943l-1.0 -5M1680 888l-0.1 -6M1654 921l-0.6 -12M162 937l-0.7 -9M1911 978l-0.6 -12M1901 925l0.6 -7M1087 948l0.9 -6M899 899l-0.0 -9M767 960l0.7 -8M595 961l-0.8 -7M923 950l-1.1 -5M911 881l-0.7 -11M1310 895l1.1 -12M830 877l0.2 -8M297 930l-0.3 -8M959 919l0.2 -9M604 898l-0.5 -3M10 977l-1.4 -10M1028 894l-0.9 -11M1164 905l-1.1 -10M927 921l-0.0 -4M72 880l0.1 -5M1004 881l0.7 -11M595 977l0.9 -12M910 920l1.0 -5M499 958l0.5 -7M1606 939l0.6 -11M1067 896l1.4 -6M884 935l-1.3 -12M1628 976l-1.5 -10M537 950l-1.2 -9M1022 910l1.5 -7M427 951l0.2 -6M36 954l1.3 -8M1753 900l-1.3 -11M1441 900l1.3 -5M1797 947l-0.4 -7M662 950l0.5 -6M1414 909l-1.1 -11M370 913l1.3 -9M1022 913l0.8 -11M652 969l-0.5 -7M1001 894l-0.0 -4M1645 978l-0.1 -9M383 955l-0.0 -6M12 877l-0.7 -8M1194 906l0.2 -8M156 960l-0.0 -9M177 931l-1.3 -7M111 939l-0.9 -8M467 962l-0.8 -5M1555 934l1.1 -11M118 918l1.1 -9M1052 908l0.1 -5M1168 913l0.9 -12M1094 957l-0.6 -8M1246 919l0.1 -3M591 898l1.3 -3M755 877l1.3 -8M69 977l0.4 -6M1275 898l1.2 -5M356 973l0.3 -8M555 942l-0.9 -10M1080 947l0.7 -6M345 896l-0.7 -6M910 954l0.8 -9M1003 895l0.1 -5M1566 889l-0.5 -8M1559 955l-1.1 -7M996 895l0.2 -8M645 896l-0.6 -11M1704 923l1.1 -5M455 961l1.2 -3M1212 930l1.4 -5M445 920l0.1 -5M1370 906l-1.0 -8M1154 903l-0.7 -10M1779 890l-0.6 -11M1398 926l1.0 -6M319 971l1.1 -9M1143 919l-0.5 -11M1565 963l0.0 -11M529 949l-0.8 -11M639 941l0.4 -4M152 897l0.2 -7M394 909l1.5 -11M1841 890l1.5 -11M459 951l0.3 -7M661 937l1.1 -3M239 961l-0.0 -4M1877 934l0.7 -4M1717 918l1.3 -9M461 899l-0.8 -10M1360 889l1.1 -3M1560 917l1.2 -7M1785 894l-1.1 -8M810 947l1.0 -11M1879 906l-0.6 -9M158 930l1.1 -7M1347 885l1.4 -10M1800 902l0.2 -9M1497 889l0.4 -8M904 897l1.3 -11M63 952l1.0 -9M934 942l-0.9 -12M541 923l-1.2 -11M409 951l0.5 -5M379 964l1.4 -11M257 909l0.9 -5M782 968l1.3 -7M502 942l1.1 -9M1491 926l1.4 -10M712 915l-0.4 -11M1799 970l1.5 -5M911 928l1.1 -7M1587 949l-0.6 -3M1407 933l-0.6 -3M1533 909l-0.8 -7M1762 918l1.3 -5M1307 897l-0.2 -4M229 934l0.5 -11M1820 908l-0.9 -5M489 946l-0.7 -9M1333 893l-0.0 -12M163 876l0.6 -10M1481 923l0.2 -8M618 900l0.7 -3M1189 932l-0.7 -6M700 889l0.6 -11M612 959l0.2 -4M1671 937l0.2 -10M1654 913l0.9 -11M1583 890l1.4 -11M549 979l-0.8 -10M875 922l-0.2 -8M1478 966l-0.9 -8M395 901l-1.1 -6M1287 885l1.3 -9M1771 917l0.6 -11M1503 909l-1.0 -6M1741 938l0.1 -10M133 898l-0.1 -9M1356 887l-0.9 -6M1577 971l-0.7 -10M439 962l0.7 -6M375 925l-0.5 -10M1667 940l-1.0 -12M693 933l0.4 -11M1190 907l0.8 -7M988 903l1.1 -11M611 905l-1.2 -4M1778 885l0.8 -11M611 901l-0.8 -10M863 965l0.7 -7M309 907l-0.6 -7M1849 933l1.0 -6M280 899l0.4 -5M248 911l-1.2 -11M1188 899l1.0 -3M1529 934l-1.1 -4M1869 887l-0.8 -5M1483 913l-0.0 -8M1475 975l1.4 -9M384 918l0.3 -8M781 964l-0.5 -9M14 941l-1.2 -12M536 913l0.8 -11M608 897l0.6 -5M623 945l-1.4 -6M1474 929l-1.0 -7M287 931l1.1 -6M1055 923l-0.1 -6M1646 877l-0.9 -11M1864 901l-0.6 -7M1751 930l1.0 -7M814 894l-1.1 -4M516 967l0.7 -5M1783 924l1.5 -8M660 953l0.8 -11M413 970l0.6 -4M386 879l-0.1 -12M566 924l-1.2 -9M220 916l-1.4 -8M783 956l-0.6 -4M1565 929l0.1 -5M248 896l0.5 -10M12 957l-0.4 -6M1483 945l-1.3 -3M432 899l1.3 -9M1117 903l-0.3 -5M694 955l-0.1 -11M1227 935l-0.4 -10M543 964l0.0 -7M236 918l-0.9 -5M803 885l-0.1 -4M355 977l1.3 -5M1563 904l0.0 -8M543 944l0.2 -11M667 907l-0.1 -4M1431 970l-0.6 -5M1669 932l-0.6 -3M675 977l-0.6 -10M69 972l-1.3 -5M924 897l-1.0 -9M1577 892l1.5 -6M430 962l-0.2 -3M1042 935l-0.5 -7M246 898l-0.6 -8M229 897l-1.2 -7M1850 969l1.2 -6M497 949l0.2 -7M1357 880l-1.2 -8M409 970l-1.3 -11M738 955l-0.7 -12M232 926l0.3 -3M1559 973l0.2 -11M571 917l0.8 -7M873 914l0.8 -10M1433 933l0.0 -11M356 916l0.4 -8M489 966l1.0 -12M7 965l1.1 -4M1053 895l0.5 -11M1500 964l-0.1 -11M293 938l0.4 -6M56 949l-0.8 -4M1794 976l-0.4 -7M521 895l-0.3 -4M729 971l-0.1 -8M1708 898l0.9 -5M738 886l0.1 -5M597 910l-0.9 -10M1148 881l0.5 -7M1263 899l0.9 -12M1584 929l0.4 -3M1569 893l-0.1 -8M775 911l0.3 -10M206 896l-1.2 -4M896 900l0.1 -7M1224 968l-1.2 -10M577 957l0.3 -5M1025 890l1.3 -6M1669 943l-0.4 -10M1123 966l1.3 -7M550 923l-0.5 -6M1300 953l-0.8 -11M680 898l-0.5 -10M99 956l0.9 -3M521 897l-1.5 -4M1091 924l1.2 -8M373 913l-0.9 -9M632 911l0.6 -6M201 907l0.1 -3M1254 913l1.0 -3M243 926l-0.9 -6M1473 901l-0.8 -8M257 915l0.0 -12M443 953l-0.5 -5M1422 891l-0.7 -4M419 963l0.3 -11M607 888l-0.4 -9M1219 960l-0.3 -3M395 960l1.0 -11M1362 895l-0.2 -5M922 896l0.1 -12M1914 910l1.3 -6M769 912l0.8 -6M1677 904l-1.4 -7M245 958l1.4 -9M788 906l0.3 -3M184 958l0.5 -6M1893 917l-1.1 -4M1058 971l-0.3 -9M1250 886l1.1 -8M1658 910l-0.1 -12M1762 900l0.3 -8M537 974l-1.3 -9M380 882l-0.6 -8M1718 883l0.4 -10M194 949l0.1 -10M1160 915l-0.3 -8M57 974l0.4 -12M746 934l-0.2 -9M200 883l-0.6 -9M324 962l-0.3 -6M420 924l0.6 -4M634 932l-1.0 -7M1816 920l-0.1 -10M416 920l1.3 -8M1038 880l0.5 -10M1171 973l0.5 -3M81 906l-1.0 -6M889 927l1.0 -5M1380 886l-1.3 -6M1166 943l0.4 -11M1322 906l1.2 -8M561 893l-0.4 -9M1549 879l-0.8 -3M1073 958l-1.5 -10M1399 914l-1.2 -10M615 903l-0.5 -9M1340 948l-0.2 -4M317 962l-0.5 -5M1371 918l-0.9 -8M20 924l1.0 -5M1763 936l1.0 -8M305 968l0.6 -9M614 965l0.9 -10M236 884l0.6 -9M1396 914l-1.3 -10M1488 937l0.8 -7M1326 974l-0.6 -10M1823 938l-0.9 -11M1638 888l0.4 -10M1546 923l-1.3 -11M1790 885l-0.3 -6M441 939l0.8 -8M1095 950l1.0 -7M1912 911l-0.3 -7M1844 925l0.4 -5M1716 910l1.4 -10M1814 920l0.4 -5M976 958l-0.2 -4M1205 899l0.0 -9M1149 950l-0.2 -10M1114 943l0.3 -6M1848 882l0.5 -5M571 875l-0.9 -11M1416 915l1.5 -7M312 926l-1.3 -8M1399 954l-0.1 -5M1540 972l-0.4 -9M423 959l0.5 -5M743 967l-0.9 -9M1776 935l0.8 -9M1791 902l0.1 -4M622 915l0.7 -9M249 940l0.5 -5M1474 950l-0.5 -7M1752 973l0.1 -11M64 914l0.2 -7M119 905l1.5 -12M1876 939l-1.0 -4M1482 911l0.7 -4M748 894l0.0 -5M23 928l1.3 -9M1623 908l-0.5 -6M1300 898l0.1 -6M788 977l0.7 -5M110 960l0.0 -8M1186 956l-0.3 -8M577 897l-0.1 -5M1371 895l-0.2 -8M70 960l0.4 -10M1832 902l-0.2 -10M1128 966l0.4 -5M1787 964l0.4 -3M750 978l-0.2 -10M582 933l1.2 -4M668 954l-0.8 -7M1340 897l-1.1 -10M657 971l-0.5 -11M1723 949l-0.0 -3M1227 901l0.3 -8M838 978l1.0 -5M28 922l0.0 -4M1025 950l-0.5 -11M1175 949l0.5 -11M1428 919l0.1 -11M271 978l-1.3 -9M1795 880l1.1 -8M1118 895l-0.9 -7M446 937l0.3 -8M1191 919l-0.9 -10M425 899l0.8 -9M797 954l1.0 -5M463 875l0.2 -10M1913 915l-1.5 -7M554 939l-0.7 -10M1237 910l-1.3 -9M1601 965l0.8 -8M685 906l-0.7 -6M1690 956l1.4 -5M224 885l0.1 -6M693 913l-0.4 -9M149 950l-0.2 -9M381 925l1.3 -7M929 948l-1.0 -3M428 897l-0.3 -5M1306 939l-0.2 -5M1392 925l-1.2 -11M698 900l-0.5 -6M843 885l-0.3 -5M1825 886l0.1 -6M1282 906l0.3 -7M1500 896l1.1 -4M256 977l0.6 -5M1896 917l0.7 -7M1056 890l-0.3 -10M178 878l0.2 -9M875 941l-1.3 -11M1148 893l-1.0 -12M738 973l1.2 -6M1699 955l0.4 -7M21 896l0.2 -12M1594 896l0.6 -5M1764 929l0.3 -12M1655 935l1.4 -11M506 924l-1.3 -8M564 929l0.2 -7M1117 889l-0.6 -10M708 980l0.3 -7M318 965l-0.8 -3M814 888l-0.4 -8M437 971l-1.0 -11M1479 948l0.4 -7M1532 946l0.1 -6M1536 919l-0.2 -7M1387 901l1.5 -7M1899 948l-0.0 -7M325 933l0.1 -4M1269 933l-0.3 -5M1736 960l0.0 -7M78 980l0.8 -5M1219 966l1.4 -10M1283 920l-0.1 -7M32 976l-0.9 -5M1169 910l-0.6 -11M597 920l-0.8 -4M504 898l0.5 -7M1195 959l-0.9 -4M540 925l1.1 -8M1166 937l1.2 -9M151 942l0.2 -7M158 968l1.0 -8M1824 911l-0.6 -3M1311 978l-1.3 -9M857 892l-1.4 -7M1719 911l-1.5 -3M1702 878l-1.1 -6M1394 920l0.1 -8M176 921l1.1 -8M1413 960l-1.2 -4M1268 959l0.2 -4M1294 948l-0.7 -4M1073 937l-0.2 -10M695 975l-1.4 -5M681 979l1.0 -5M39 942l-1.3 -11M907 966l-1.0 -12M1302 911l0.3 -11M1352 964l-1.0 -10M1231 950l0.2 -6M85 884l1.1 -6M1769 935l-1.5 -3M1303 938l-0.0 -3M1044 933l1.4 -5M1351 882l-0.3 -3M170 943l1.5 -11M1441 898l-0.2 -11M1730 971l0.6 -4M206 956l-0.6 -3M437 896l0.4 -11M49 947l-0.6 -5M1774 974l1.3 -5M549 898l-0.5 -6M1762 887l-0.2 -4M1032 896l1.2 -5M628 876l0.9 -10M996 924l0.8 -7M1235 964l-0.5 -9M697 965l0.8 -6M1213 958l0.1 -6M798 960l-0.6 -6M453 912l1.4 -4M369 906l-0.4 -8M1219 887l-0.8 -10M1021 952l-1.3 -5M1673 901l0.5 -3M1407 894l0.8 -11M1827 876l-0.2 -10M1142 906l-1.4 -10M604 943l1.5 -7M1402 897l1.2 -6M1069 916l-1.1 -10M1390 943l0.3 -9M189 961l-0.8 -5M793 916l1.1 -11M1746 928l1.4 -6M424 935l-0.8 -4M1083 902l0.2 -4M55 941l-1.4 -7M167 911l1.4 -10M567 964l0.8 -9M1499 899l0.3 -8M1500 919l-0.2 -8M564 970l-0.1 -4M1261 979l1.2 -11M823 970l-1.2 -9M1016 949l-0.6 -9M1019 909l-0.4 -9M1784 909l1.1 -10M570 938l0.5 -7M692 924l0.2 -5M1853 899l0.9 -10M547 951l-0.8 -9M958 964l0.0 -7M740 919l-0.4 -5M509 966l-0.9 -11M817 879l-0.5 -9M139 945l0.2 -10M552 974l-0.6 -4M850 923l-0.6 -8M744 894l-0.7 -11M827 903l1.4 -4M1829 954l-0.9 -10M739 955l0.5 -10M575 906l1.1 -11M1649 958l1.0 -11M823 975l-0.4 -9M709 959l-0.3 -6M777 951l-0.1 -6M1811 978l0.7 -4M859 964l-0.0 -4M420 926l1.1 -12M1463 908l0.2 -11M1270 942l0.5 -9M472 907l1.4 -6M494 916l-1.3 -3M1512 952l-0.9 -12M1712 931l1.0 -8M241 930l1.1 -10M1144 899l0.9 -11M84 943l-1.1 -5M1692 946l0.4 -12M1346 912l-1.4 -4M386 952l-1.1 -9M277 916l0.9 -9M84 890l-0.8 -6M608 922l-0.4 -3M1713 905l0.8 -8M1112 944l1.2 -5M311 977l-0.7 -4M1120 919l-0.8 -8M1484 943l0.9 -5M1008 924l0.6 -4M1306 905l0.5 -11M1375 953l-1.3 -8M1756 923l-0.4 -9M876 941l-1.2 -12M178 957l1.2 -7M957 886l0.5 -12M1797 971l0.4 -11M1408 977l1.0 -6M1621 895l0.5 -11M709 924l0.2 -4M312 973l-0.3 -8M1463 937l1.0 -9M1861 895l-0.6 -8M1720 963l-1.0 -5M261 952l-1.2 -10M792 932l1.3 -11M1564 942l0.3 -4M552 904l-0.9 -6M548 928l0.1 -11M907 896l-0.7 -8M1860 896l1.1 -8M600 945l1.0 -7M1173 968l-0.9 -6M1062 886l1.4 -9M1763 893l1.4 -5M1287 916l0.6 -9M855 930l-1.3 -8M1667 920l0.5 -8M824 884l1.2 -6M339 941l-1.0 -10M550 923l1.3 -8M221 948l-1.2 -8M72 904l-1.0 -11M1254 955l1.3 -12M602 937l0.9 -12M1824 908l1.5 -11M662 901l1.3 -5M1244 880l-0.7 -5M326 974l1.4 -4M1223 886l0.2 -9M1503 922l-0.8 -5M210 960l-1.0 -5M980 896l-0.5 -9M896 955l-0.8 -10M995 956l0.1 -8M643 932l-0.0 -5M1320 976l1.1 -5M877 877l-0.7 -9M612 935l-1.0 -7M943 965l-0.1 -5M1607 957l1.3 -4M955 977l0.2 -7M721 894l0.1 -11M1007 878l1.0 -9M1554 910l0.3 -11M1628 972l0.2 -3M1363 953l0.9 -3M1214 897l-0.8 -7M672 929l0.9 -8M236 905l0.5 -11M579 950l1.2 -3M858 953l0.1 -12M575 917l0.5 -5M116 919l0.2 -5M1347 936l0.4 -6M967 923l0.3 -4M1465 923l0.9 -10M1225 975l-0.4 -7M1293 928l0.9 -5M80 961l-1.0 -10M114 896l0.1 -6M1789 952l-0.1 -10M926 903l1.1 -11M1169 950l0.3 -11M1516 882l0.9 -5M1773 912l-0.5 -10M20 913l-0.4 -9M502 957l0.4 -9M259 888l1.3 -8M522 956l-0.4 -9M634 895l1.1 -6M244 898l0.2 -6M712 934l1.1 -7M794 975l0.8 -7M679 928l-1.0 -7M1183 958l1.5 -4M935 960l-0.5 -6M1835 901l0.7 -11M707 924l0.6 -9M1900 888l0.0 -4M167 974l-0.0 -9M1309 954l0.5 -8M1075 896l0.4 -8M1280 899l-0.4 -4M845 942l-1.2 -4M401 974l1.4 -8M409 976l-1.1 -10M954 937l1.4 -11M442 972l0.3 -9M1353 945l0.9 -8M373 894l-1.0 -10M320 919l-0.7 -10M1562 979l-0.1 -11M128 960l-1.1 -11M977 963l1.2 -6M1915 913l1.0 -6M407 905l-0.3 -8M273 891l-1.0 -8M700 968l0.9 -4M655 949l-0.5 -5M964 957l1.3 -10M1778 970l0.5 -10M304 943l1.3 -5M45 900l-0.2 -11M891 913l1.4 -7M1761 970l-1.0 -9M784 891l0.8 -10M748 897l-1.0 -10M1193 964l-1.1 -7M1221 959l0.3 -4M799 972l-1.0 -5M1372 895l-0.6 -10M380 970l0.7 -3M1311 913l0.9 -10M1025 890l0.4 -10M369 971l-1.1 -12M1371 949l1.1 -7M730 925l0.3 -7M1786 903l-0.7 -5M1893 917l-1.5 -6M1148 909l0.5 -5M65 961l1.1 -4M601 937l0.2 -11M274 913l-0.6 -12M659 951l-0.9 -6M571 884l-0.9 -10M359 911l1.0 -12M1061 904l0.7 -7M461 914l1.4 -3M1662 897l-0.2 -12M961 929l-1.3 -7M195 890l0.8 -10M825 963l0.8 -8M339 926l0.9 -7M317 936l0.7 -4M1514 907l0.5 -6M860 904l0.4 -3M942 893l0.2 -3M557 952l1.5 -3M1188 934l0.0 -10M350 978l0.3 -12M1743 924l1.2 -6M1768 899l-0.1 -5M1353 896l0.0 -8M1499 921l0.4 -5M941 970l1.2 -11M881 915l-0.0 -9M1096 938l-0.0 -4M1270 882l0.4 -9M850 970l0.5 -4M205 963l-0.8 -3M1254 961l-0.8 -9M179 926l1.4 -6M800 979l0.6 -10M825 943l0.2 -3M832 933l0.9 -9M1796 914l1.2 -10M1676 910l-1.0 -12M125 900l1.0 -10M769 891l-1.5 -7M966 971l-0.4 -6M1140 953l0.9 -3M1430 911l0.7 -7M394 958l0.6 -9M307 878l-1.1 -6M1659 905l0.2 -4M1569 970l-0.1 -8M1881 926l0.3 -12M763 902l1.2 -3M1886 956l-0.8 -9M743 878l0.3 -3M849 938l0.6 -7M1374 965l0.4 -4M927 876l0.7 -6M1637 913l1.5 -9M1209 913l-1.1 -7M717 976l-1.4 -10M1822 942l1.1 -8M130 901l1.4 -6M7 967l1.1 -10M653 966l1.4 -10M1882 906l-1.0 -11M1023 918l1.4 -4M80 928l-0.6 -3M973 944l0.5 -6M29 976l0.7 -5M949 896l0.8 -7M376 904l-1.1 -7M1797 963l0.0 -5M1898 946l0.0 -4M630 896l0.0 -10M393 967l0.3 -11M1486 939l0.9 -7M1798 898l-0.3 -11M1723 905l-0.9 -6M251 899l1.4 -4M1098 972l-1.3 -4M635 961l-0.8 -4M1559 879l0.3 -3M1317 928l1.4 -6M1782 881l-0.4 -4M1879 971l0.1 -11M1150 890l1.1 -9M1676 899l0.6 -6M659 943l-0.9 -9M730 905l-1.3 -6M1178 917l-0.4 -6M1264 920l-0.2 -9M238 930l0.4 -5M1577 913l-1.4 -9M566 966l-0.5 -3M1475 898l0.6 -5M1677 917l-1.2 -9M835 927l-1.0 -8M740 896l1.2 -8M1172 973l0.1 -10M742 974l0.5 -5M1103 896l0.3 -12M598 886l0.6 -8M1724 882l1.2 -11M818 896l-1.2 -8M1206 960l-0.5 -5M962 909l-0.3 -11M409 891l1.4 -12M1654 946l-0.1 -4M623 911l-0.8 -12M1289 973l-0.4 -9M1730 919l-0.5 -10M463 952l-1.4 -7M607 970l0.1 -3M128 917l-0.6 -4M1677 929l0.7 -7M1830 920l-0.0 -10M1549 947l-0.5 -9M377 885l0.6 -7M470 927l1.0 -5M615 932l0.4 -8M1507 944l-0.5 -9" stroke="#031219" stroke-width="1" opacity=".35" fill="none"/>
    
  </svg>
</div>

<!-- desktop icons -->
<svg style="position:absolute;left:0;top:0" width="80" height="720" viewBox="0 0 80 720">
 <defs>
  <linearGradient id="can" x1="0" y1="0" x2="1" y2="0"><stop offset="0" stop-color="#8a8a8a"/><stop offset="0.35" stop-color="#e6e6e6"/><stop offset="0.7" stop-color="#a5a5a5"/><stop offset="1" stop-color="#6e6e6e"/></linearGradient>
  <radialGradient id="lid" cx="0.4" cy="0.4" r="0.7"><stop offset="0" stop-color="#e8e8e8"/><stop offset="1" stop-color="#8c8c8c"/></radialGradient>
  <radialGradient id="gl" cx="0.45" cy="0.4" r="0.65"><stop offset="0" stop-color="#f4f6fa"/><stop offset="0.35" stop-color="#b9c6de"/><stop offset="0.7" stop-color="#5d70a8"/><stop offset="1" stop-color="#2e3260"/></radialGradient>
  <linearGradient id="orng" x1="0" y1="0" x2="1" y2="1"><stop offset="0" stop-color="#f5b848"/><stop offset="0.6" stop-color="#eaa22e"/><stop offset="1" stop-color="#f08a20"/></linearGradient>
  <linearGradient id="fth" x1="0" y1="1" x2="1" y2="0"><stop offset="0" stop-color="#1fae5a"/><stop offset="0.5" stop-color="#3aa6a0"/><stop offset="1" stop-color="#7ab8e8"/></linearGradient>
  <linearGradient id="fold" x1="0" y1="0" x2="0" y2="1"><stop offset="0" stop-color="#f7b93a"/><stop offset="1" stop-color="#e29420"/></linearGradient>
  <linearGradient id="wifi" x1="0" y1="0" x2="1" y2="1"><stop offset="0" stop-color="#1f5fd0"/><stop offset="1" stop-color="#3aa0f0"/></linearGradient>
  <linearGradient id="ns" x1="0" y1="0" x2="1" y2="1"><stop offset="0" stop-color="#3aa0e0"/><stop offset="1" stop-color="#1f4fc0"/></linearGradient>
  <linearGradient id="cb" x1="0" y1="0" x2="1" y2="1"><stop offset="0" stop-color="#3bb4f2"/><stop offset="1" stop-color="#1a80e0"/></linearGradient>
 <g id="globeicon">
  <circle cx="23" cy="23" r="22.6" fill="#8a93a8"/>
  <circle cx="23" cy="23" r="21.4" fill="url(#gl)"/>
  <ellipse cx="32.5" cy="14.5" rx="7" ry="6.5" fill="#e8ebf2" opacity=".85"/>
  <circle cx="22" cy="29" r="2.4" fill="#d9c58a" opacity=".7"/>
  <path d="M9.9 4.8 C7.5 12 10 22 15 26 C22 31 32 33.5 41.5 33.5 L40.5 36 C38 41 36 43 33 43.5 C24 41 14 35 9 29 C4 23 2 17 2.8 12.4 C4 9 6.5 6 9.9 4.8 Z" fill="url(#orng)"/>
 </g>
 </defs>
 <!-- trash -->
 <path d="M21.5 17.5h29l-3 37.5q-11.5 3 -23 0z" fill="url(#can)"/>
 <path d="M26 22v30M30.5 22v31M35 22v31.5M39.5 22v31M44 22v30" stroke="#6c6c6c" stroke-width="1.2" opacity=".7"/>
 <ellipse cx="36" cy="17.5" rx="15" ry="3" fill="#9a9a9a"/>
 <path d="M24 17c3-5 8-3 12-5 4-2 7 1 11 0 2 2 2 4 1 5z" fill="#e8e8e8"/>
 <ellipse cx="53.5" cy="43" rx="8.5" ry="14.5" transform="rotate(-20 53.5 43)" fill="url(#lid)"/>
 <ellipse cx="53.5" cy="43" rx="2.2" ry="4" transform="rotate(-20 53.5 43)" fill="#7a7a7a"/>
 <use href="#globeicon" x="16" y="102"/>
 <!-- notepad -->
 <path d="M18 200.5 L44 196.5 L61.5 224 L31.5 231 Z" fill="#f3f3f3"/>
 <path d="M31.5 231 L61.5 224 L61.5 226.5 L32 233.5 Z" fill="#c9c9c9"/>
 <path d="M19 199.5 L43 196" stroke="#8a8a8a" stroke-width="1.4" stroke-dasharray="1.2 1.3"/>
 <path d="M36 219 L57 214 M38 222.5 L59 217.5 M40 226 L60 221" stroke="#dadada" stroke-width="0.6"/>
 <path d="M34 216.5 C35 206 46 196 57 193.5 C61 195 58 204 50 210 C45 214 39 216 34 216.5 Z" fill="url(#fth)"/>
 <path d="M33.5 223 L35 216 L55 197" stroke="#c8e0d8" stroke-width="0.5" fill="none"/>
 <!-- terminal -->
 <rect x="17" y="283" width="44" height="44" rx="1" fill="#454a5a"/>
 <rect x="17" y="283" width="44" height="4.5" rx="1" fill="#d6d7db"/>
 <path d="M22.5 292.5l5 3.5-5 3.5" stroke="#fff" stroke-width="1.8" fill="none"/>
 <rect x="30" y="298.5" width="7" height="1.8" fill="#fff"/>
 <!-- bforcee lock -->
 <defs><radialGradient id="lockb" cx="0.45" cy="0.4" r="0.6"><stop offset="0" stop-color="#fbfbfb"/><stop offset="0.7" stop-color="#eeeeee"/><stop offset="1" stop-color="#d8d4d8"/></radialGradient></defs>
 <path d="M30.2 392v-10.5a8.8 8.8 0 0 1 17.6 0v10.5" stroke="#6a6284" stroke-width="3" fill="none"/>
 <circle cx="39" cy="401.5" r="16.8" fill="url(#lockb)"/>
 <circle cx="39" cy="401" r="7.6" fill="#3c4a78"/>
 <circle cx="39" cy="401" r="6.7" fill="#5b9ef2"/>
 <circle cx="39" cy="400.5" r="3.2" fill="none" stroke="#8cbcf5" stroke-width="0.7"/>
 <!-- ftp folder -->
 <path d="M17 468.5q0-2 2-2h10l3 3h28q2 0 2 2v3h-45z" fill="#d98e18"/>
 <rect x="19" y="470" width="40" height="6" fill="#f4f0e8"/>
 <path d="M16 474h46v27q0 2-2 2h-42q-2 0-2-2z" fill="url(#fold)"/>
 <path d="M29.5 481a14 14 0 0 1 19 0" stroke="url(#wifi)" stroke-width="2.6" fill="none"/>
 <path d="M32.5 485a9 9 0 0 1 13 0" stroke="url(#wifi)" stroke-width="2.4" fill="none"/>
 <path d="M35.5 489a4.5 4.5 0 0 1 7 0" stroke="url(#wifi)" stroke-width="2.2" fill="none"/>
 <circle cx="39" cy="492.5" r="2.2" fill="#1f5fd0"/>
 <text x="39" y="501" text-anchor="middle" font-family="Liberation Sans" font-weight="bold" font-size="7.5" fill="#4a8ad8">FTP</text>
 <!-- nscanner -->
 <g stroke="url(#ns)" fill="none" stroke-width="1.8">
  <circle cx="39.5" cy="574.5" r="19"/>
  <path d="M26 561 Q40 572 52 588"/>
  <path d="M33 556 Q30 578 40 593"/>
  <path d="M21 570 Q38 564 57 566"/>
  <path d="M22 582 Q40 590 52 560"/>
 </g>
 <circle cx="26" cy="561" r="2.6" fill="#3a9ee0"/>
 <circle cx="56.5" cy="566" r="2.8" fill="#1f4fc0"/>
 <circle cx="35" cy="593" r="2.8" fill="#2f7fd8"/>
 <!-- chat -->
 <rect x="23.3" y="647" width="37.4" height="27.5" rx="1.5" fill="#1c64c8"/>
 <path d="M19 651.5q0-1.5 1.5-1.5h36.5q1.5 0 1.5 1.5v26q0 1.5-1.5 1.5h-17.5L29.5 687.5L29 679h-8.5q-1.5 0-1.5-1.5z" fill="url(#cb)"/>
</svg>
<div class="dicon" style="top:0px"><div class="lb">Trash</div></div>
<div class="dicon" style="top:90px"><div class="lb">Browser</div></div>
<div class="dicon" style="top:180px"><div class="lb">Notepad</div></div>
<div class="dicon" style="top:270px"><div class="lb">Terminal</div></div>
<div class="dicon" style="top:360px"><div class="lb">BForcee</div></div>
<div class="dicon" style="top:450px"><div class="lb">FTP</div></div>
<div class="dicon" style="top:540px"><div class="lb">NScanner</div></div>
<div class="dicon" style="top:630px"><div class="lb">Chat</div></div>

<!-- terminal -->
<div class="win term">
  <div class="tbar"><div class="termic" style="position:absolute;left:10px;top:6px;width:18px;height:18px;border-top-width:1.5px"></div><span style="position:absolute;left:37px;top:5px;font-size:15.5px;line-height:18px;transform:scaleX(0.855);transform-origin:0 0;color:#c9cbd0">Terminal</span>
    <div style="position:absolute;left:605px;top:17px;width:14px;height:2px;background:#e0e0e0"></div>
    <svg style="position:absolute;left:638px;top:7px" width="12" height="12" viewBox="0 0 12 12"><path d="M0.5 0.5L11.5 11.5M11.5 0.5L0.5 11.5" stroke="#e4e4e4" stroke-width="1.35"/></svg></div>
</div>
<div class="mono" id="tt" style="top:85.3px;line-height:20.92px"><span style="color:#b9bec8">Welcome to the ByteBurstOS terminal!</span>
Type "<b>help</b>" for command list.
root@system:~$ metasploit
<span style="color:#f4473c;-webkit-text-stroke:0.35px #f4473c">    __  ___     __                   __      _ __
   /  |/  /__  / /_____ __________  / /___  (_) /_
  / /|_/ / _ \/ __/ __ `/ ___/ __ \/ / __ \/ / __/
 / /  / /  __/ /_/ /_/ (__  ) /_/ / / /_/ / / /_
/_/  /_/\___/\__/\__,_/____/ .___/_/\____/_/\__/
                          /_/</span>
---=[ <span style="color:#f0742a">metasploit v6.1.14-dev</span>                                        <span style="position:relative;left:5px">]</span>
---=[ 2251 exploits - 1187 auxiliary                                <span style="position:relative;left:5px">]</span>
---=[ 951 payloads - 45 encoders                                    <span style="position:relative;left:5px">]</span>

For more information about metasploit: type 'help'
root@system:~$ &gt; <span class="ms">Metasploit</span> &gt; scan
<span style="color:#ef4444;font-weight:bold">[ERROR]</span> <span style="color:#9ea3ab">RHOST not found or cannot connect.</span></div>
<div class="mono" style="top:424px;line-height:20.85px"><span style="color:#e9a23b">root@system:~$</span> &gt; <span class="ms">Metasploit</span> &gt; <span class="cur"></span></div>

<!-- browser -->
<div class="win browser">
  <div class="tbar" style="height:29px;background:#15171c">
    <svg style="position:absolute;left:9px;top:6px" width="20" height="20" viewBox="0 0 46 46"><use href="#globeicon"/></svg>
    <span style="position:absolute;left:36px;top:6px;font-size:16.2px;line-height:18px;transform:scaleX(0.80);transform-origin:0 0;color:#c9cbd0">Secure Browser</span>
    <div style="position:absolute;left:929px;top:18px;width:14px;height:2px;background:#e0e0e0"></div>
    <svg style="position:absolute;left:961px;top:7px" width="13" height="13" viewBox="0 0 13 13"><path d="M1 1L12 12M12 1L1 12" stroke="#e4e4e4" stroke-width="1.6"/></svg>
  </div>
  <div style="position:absolute;left:1px;top:29px;right:1px;height:73px;background:#1e2029">
    <svg style="position:absolute;left:10px;top:13px" width="12" height="16" viewBox="0 0 12 16"><path d="M9 1.5L3 8L9 14.5" stroke="#e0e0e0" stroke-width="1.8" fill="none"/></svg>
    <svg style="position:absolute;left:39px;top:11px" width="19" height="18" viewBox="0 0 19 18"><path d="M9.5 1L1 9h2.5v8h4.5v-5h3v5h4.5V9H18z" fill="#d9d9d9"/><rect x="13" y="2" width="2.5" height="5" fill="#d9d9d9"/></svg>
    <span style="position:absolute;left:76px;top:10px;color:#f2f2f2;font-size:16px;line-height:20px">globalbank.net</span>
    <svg style="position:absolute;left:957px;top:11px" width="17" height="17" viewBox="0 0 17 17"><path d="M8.5 0v10M4 6l4.5 4.5L13 6" stroke="#dcdcdc" stroke-width="1.8" fill="none"/><rect x="0.5" y="12" width="16" height="5" rx="2.5" fill="#dcdcdc"/><circle cx="13.5" cy="14.5" r="0.9" fill="#1e2029"/></svg>
    <div style="position:absolute;left:0;top:36px;height:37px;width:100%;font-size:13.6px;color:#eaeaea">
      <svg style="position:absolute;left:16px;top:8px" width="17" height="16" viewBox="0 0 17 16"><path d="M0 7a4 4 0 0 1 4-4h6v13H0z" fill="#1e90ff"/><circle cx="4" cy="8" r="1.6" fill="#1e2029"/><path d="M10 3h3a4 4 0 0 1 4 4v9h-7" stroke="#1e90ff" stroke-width="1.4" fill="none"/><path d="M11.5 8V0.5h3" stroke="#1e90ff" stroke-width="1.3" fill="none"/></svg>
      <span style="position:absolute;left:38px;top:10px">Nexus Mail</span>
      <svg style="position:absolute;left:131px;top:8px" width="16" height="17" viewBox="0 0 16 17"><path d="M8 0L0.5 4v1.5h15V4z" fill="#20a050"/><circle cx="8" cy="3.3" r="1" fill="#1e2029"/><rect x="1.5" y="6.5" width="13" height="1.2" fill="#20a050"/><rect x="2.3" y="8" width="1.6" height="5" fill="#20a050"/><rect x="5.5" y="8" width="1.6" height="5" fill="#20a050"/><rect x="8.9" y="8" width="1.6" height="5" fill="#20a050"/><rect x="12.1" y="8" width="1.6" height="5" fill="#20a050"/><rect x="1" y="13.5" width="14" height="1.3" fill="#20a050"/><rect x="0" y="15.5" width="16" height="1.3" fill="#20a050"/></svg>
      <span style="position:absolute;left:154px;top:10px">Global Bank</span>
      <svg style="position:absolute;left:253px;top:8px" width="17" height="17" viewBox="0 0 17 17"><circle cx="8.5" cy="8.5" r="7.5" stroke="#2d8ff0" stroke-width="1.6" stroke-dasharray="1.6 1.4" fill="none"/><circle cx="8.5" cy="8.5" r="4.3" stroke="#2d8ff0" stroke-width="1.6" fill="none"/><circle cx="8.5" cy="8.5" r="1.8" stroke="#2d8ff0" stroke-width="1.2" fill="none"/></svg>
      <span style="position:absolute;left:278px;top:10px">FriendLinker</span>
      <svg style="position:absolute;left:380px;top:8px" width="16" height="18" viewBox="0 0 16 18"><path d="M5 6V3.5a3 3 0 0 1 6 0V6" stroke="#e8a313" stroke-width="1.3" fill="none"/><path d="M1.5 6h13l1 11.5H0.5z" fill="#e8a313"/><circle cx="5" cy="7" r="0.7" fill="#1e2029"/><circle cx="11" cy="7" r="0.7" fill="#1e2029"/></svg>
      <span style="position:absolute;left:404px;top:10px">App Store</span>
    </div>
  </div>
  <div id="page" style="position:absolute;left:1px;top:102px;width:983px;height:596px;background:#d1d5db;overflow:hidden;border-radius:0 0 6px 6px">
    <div style="position:absolute;left:0;top:0;width:983px;height:63px;background:#1a823e;color:#fff">
      <svg style="position:absolute;left:40px;top:19px" width="25" height="26" viewBox="0 0 25 26"><path d="M12.5 0.5L0.5 8.5v1.5h24V8.5z" fill="#fff"/><circle cx="12.5" cy="5.5" r="1.5" fill="#1a823e"/><rect x="2" y="11" width="21" height="1.8" fill="#fff"/><rect x="3.2" y="13" width="2.6" height="8" fill="#fff"/><rect x="8.3" y="13" width="2.6" height="8" fill="#fff"/><rect x="14.1" y="13" width="2.6" height="8" fill="#fff"/><rect x="19.2" y="13" width="2.6" height="8" fill="#fff"/><rect x="1.5" y="21.3" width="22" height="1.8" fill="#fff"/><rect x="0" y="24" width="25" height="2" fill="#fff"/></svg>
      <span style="position:absolute;left:70px;top:18px;font-size:25px;line-height:28px">GlobalBank</span>
      <span style="position:absolute;left:856px;top:22px;font-size:16px;line-height:20px">SteelWaffe7</span>
    </div>
    <div style="position:absolute;left:977px;top:63px;width:6px;height:287px;background:#5b5b5e;border-radius:0 0 3px 3px"></div>
    <div class="card" style="left:40px;top:104px;width:224px;height:96px"><div class="ct">Total</div><div class="cv"><span class="dl">$</span>995.00</div></div>
    <div class="card" style="left:284px;top:104px;width:224px;height:96px"><div class="ct">Dept</div><div class="cv"><span class="dl">$</span>0.00</div></div>
    <div style="position:absolute;left:41px;top:242px;font-size:16px;line-height:20px;color:#111">Transactions</div>
    <div class="tx" style="top:264px"><div class="tn"><b>AppStore</b><span class="dash">-</span><span class="desc">Product purchased -&gt; Network Scanner</span></div><div class="tv"><span class="dl">$</span>-100.00</div><div class="tm">a minute ago</div></div>
    <div class="tx" style="top:384px"><div class="tn"><b>AppStore</b><span class="dash">-</span><span class="desc">Product purchased -&gt; Chat App</span></div><div class="tv"><span class="dl">$</span>-80.00</div><div class="tm">a minute ago</div></div>
    <div class="tx" style="top:504px"><div class="tn"><b>admin</b><span class="dash">-</span><span class="desc">.</span></div><div class="tv"><span class="dl">$</span>1,000.00</div><div class="tm">a minute ago</div></div>
  </div>
</div>

<!-- taskbar -->
<div id="taskbar" style="position:absolute;left:0;top:976px;width:1920px;height:42px;background:rgba(2,4,6,0.86)">
  <svg style="position:absolute;left:9px;top:5px" width="29" height="29" viewBox="0 0 29 29">
    <defs><radialGradient id="kg" cx="0.4" cy="0.35" r="0.7"><stop offset="0" stop-color="#3a9bff"/><stop offset="1" stop-color="#1769e0"/></radialGradient></defs>
    <circle cx="14.5" cy="14.5" r="14" fill="url(#kg)"/>
    <path d="M2 9.5Q9 7.5 15.5 8.8Q20.5 9.8 23.3 14.5" stroke="#e8eef8" stroke-width="1.1" fill="none"/>
    <path d="M3.5 13.2Q8 10.8 13.5 10.8" stroke="#e8eef8" stroke-width="0.9" fill="none"/>
    <path d="M17 11.5Q13.5 13.5 15 16.5Q17 18.5 21 19Q24 20.5 25.5 24.5" stroke="#e8eef8" stroke-width="1" fill="none"/>
  </svg>
  <div style="position:absolute;left:48px;top:0;width:1px;height:42px;background:rgba(255,255,255,0.06)"></div>
  <div class="tbi" style="left:57px"><svg class="tic" style="left:13px;top:10px" width="23" height="21" viewBox="0 0 23 21"><defs><linearGradient id="cg2" x1="0" y1="0" x2="0" y2="1"><stop offset="0" stop-color="#2aa8ee"/><stop offset="1" stop-color="#1a8ae6"/></linearGradient></defs><path d="M1 1.5q0-1 1-1h19q1 0 1 1v13q0 1-1 1h-11L6.5 20L5.5 15.5H2q-1 0-1-1z" fill="url(#cg2)"/></svg><span class="tbt" style="left:44px">Chat App</span></div>
  <div class="tbi" style="left:257px"><svg class="tic" style="left:12px;top:8px" width="23" height="23" viewBox="0 0 46 46"><use href="#globeicon"/></svg><span class="tbt" style="left:43.5px">Secure Browser</span></div>
  <div class="tbi" style="left:457px"><div class="tic termic" style="left:13px;top:7px;width:22px;height:22px"></div><span class="tbt" style="left:44.5px">Terminal</span></div>
  <div style="position:absolute;left:0;top:39.5px;width:1920px;height:2.5px;background:#2a2c30"></div>
  <div style="position:absolute;left:491px;top:40px;width:49px;height:2px;background:#55585e"></div>
  <svg style="position:absolute;left:1824px;top:12px" width="17" height="16" viewBox="0 0 17 16"><path d="M0.5 5h3.5L9 0.5v15L4 11H0.5z" fill="#d8d8d8"/><path d="M11 5a3.5 3.5 0 0 1 0 6" stroke="#d8d8d8" stroke-width="1.6" fill="none"/><path d="M12.5 1.5a7 7 0 0 1 0 13" stroke="#d8d8d8" stroke-width="1.3" fill="none"/></svg>
  <svg style="position:absolute;left:1854px;top:13px" width="20" height="15" viewBox="0 0 20 15"><path d="M0 4.5Q10 -3 20 4.5L10 14.5z" fill="#d8d8d8"/></svg>
  <svg style="position:absolute;left:1888px;top:12px" width="18" height="16" viewBox="0 0 18 16"><path d="M11.5 3.2A6.5 6.5 0 1 0 11.5 12.8" stroke="#d8d8d8" stroke-width="1.3" fill="none"/><path d="M5.5 8h8" stroke="#d8d8d8" stroke-width="1.8"/><path d="M12.5 5l4 3-4 3z" fill="#d8d8d8"/></svg>
</div>
</body></html>
